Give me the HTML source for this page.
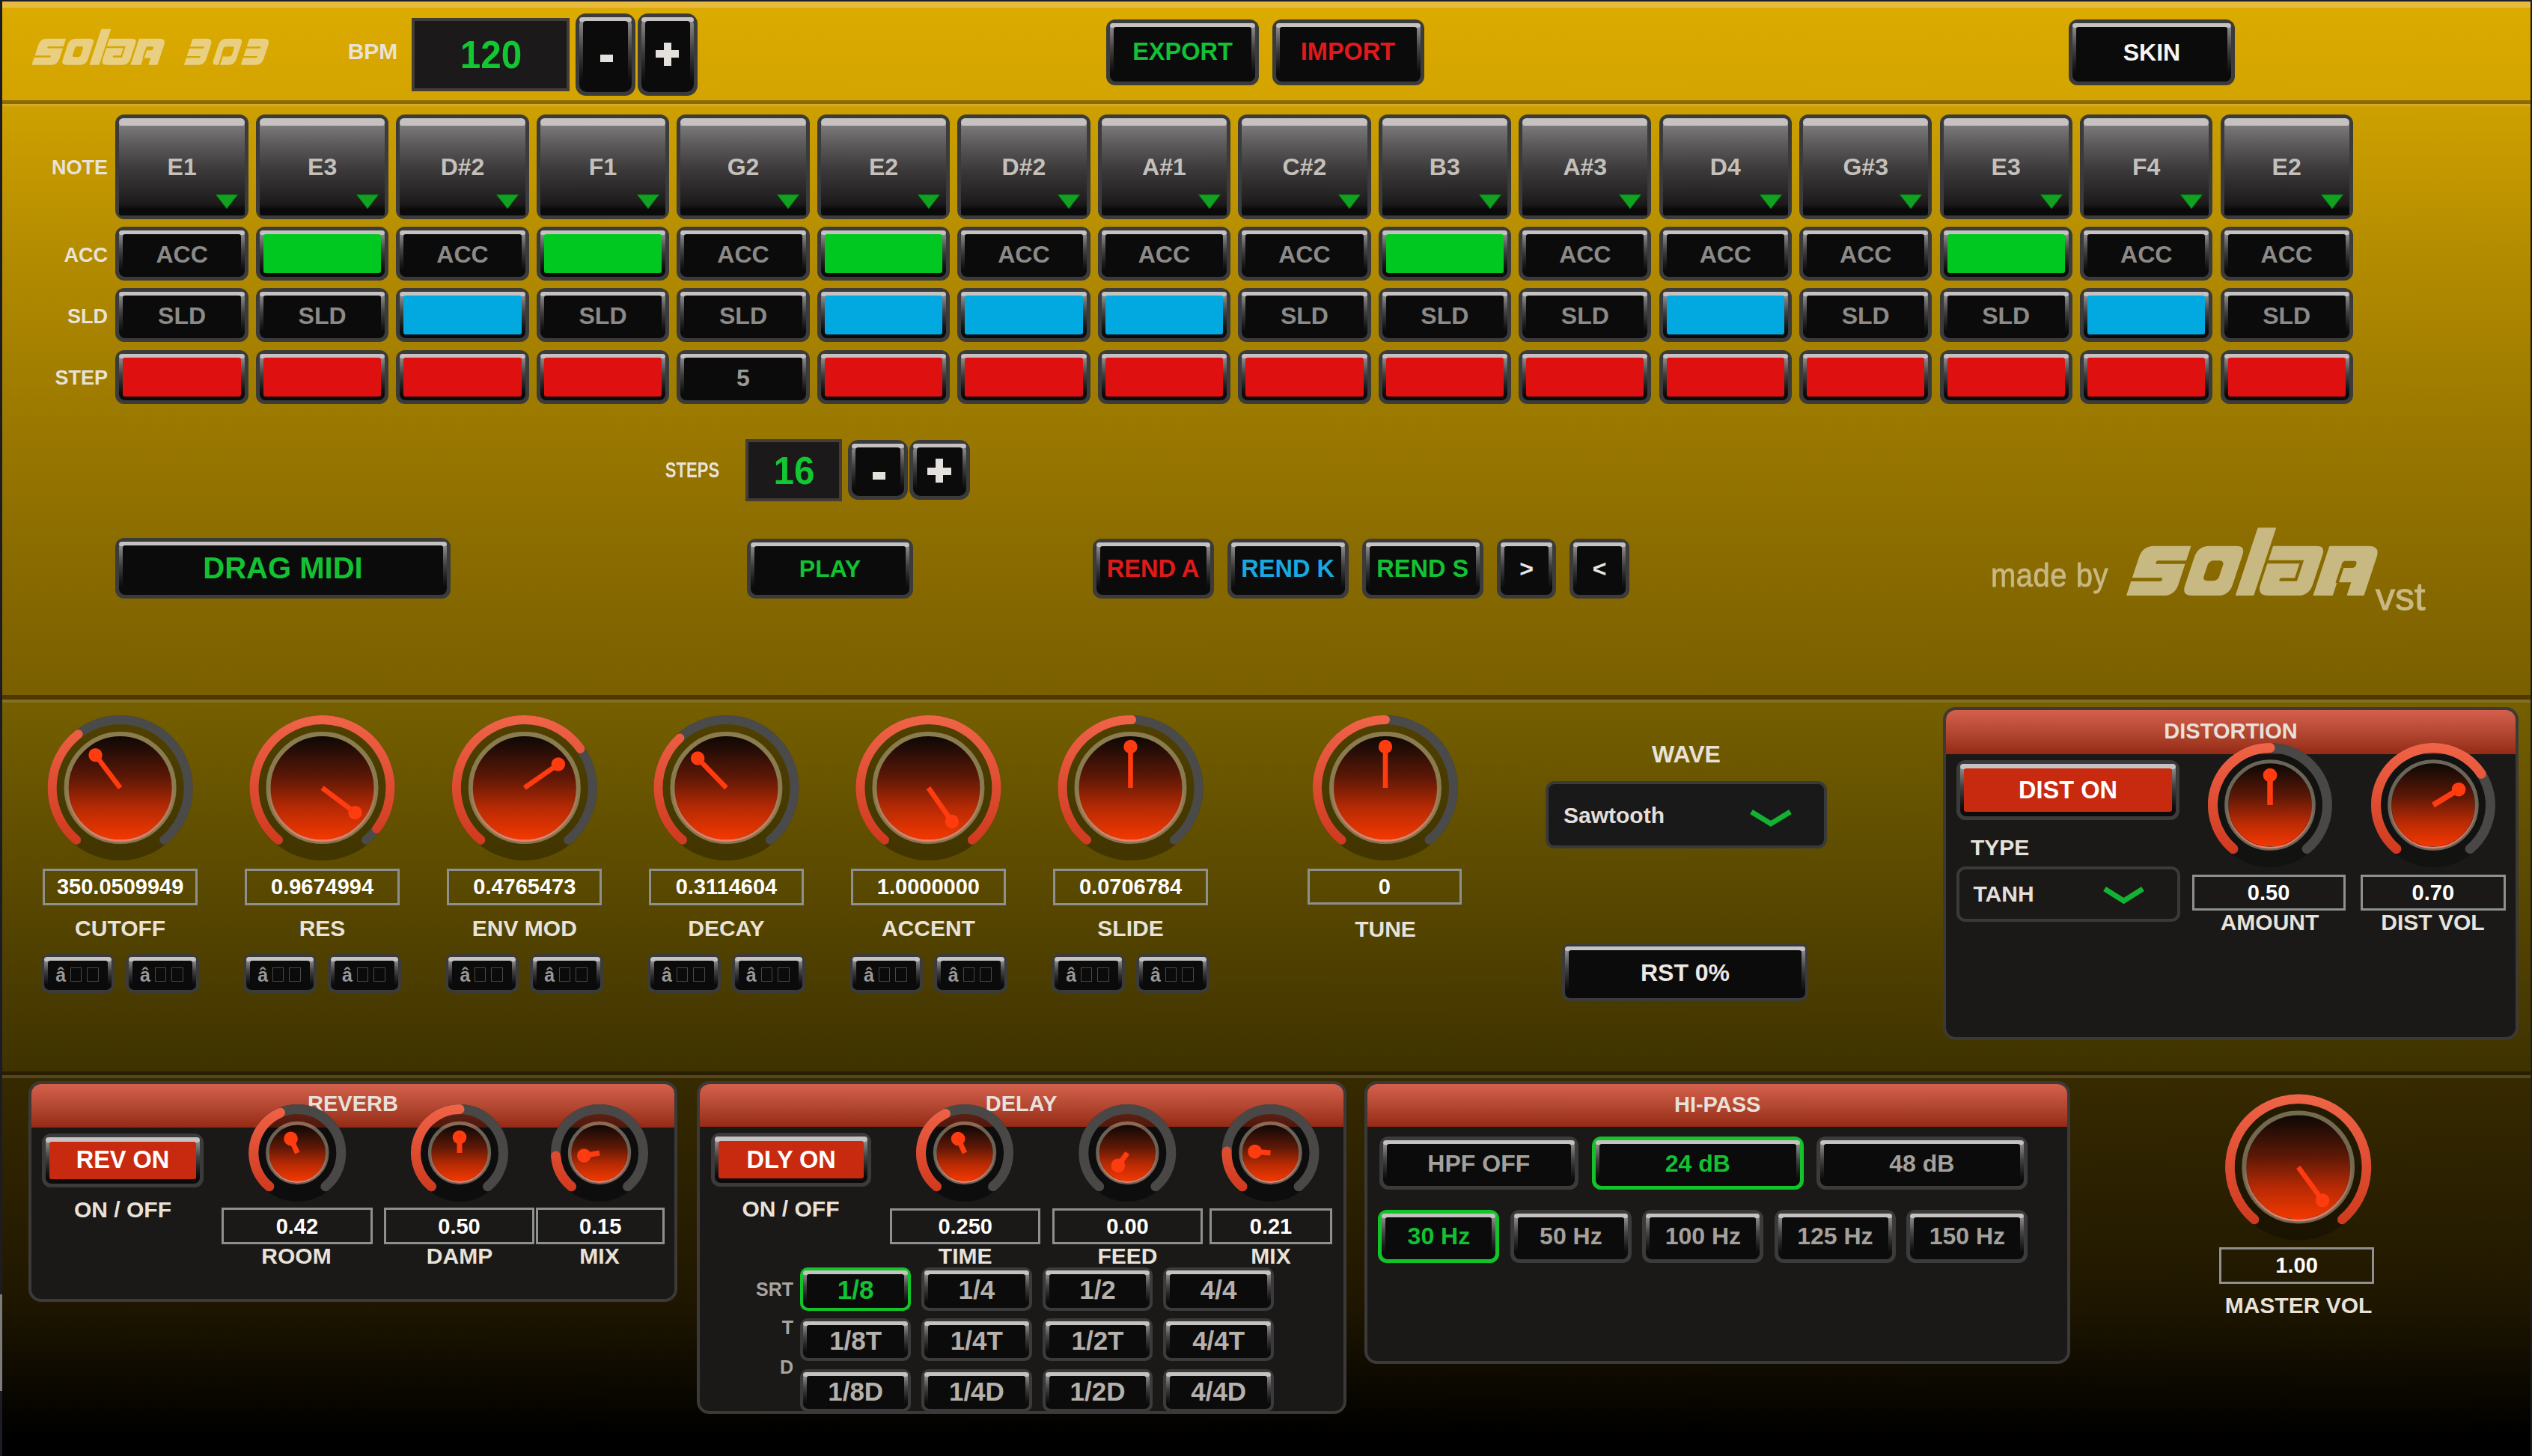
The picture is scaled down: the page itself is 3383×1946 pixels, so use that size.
<!DOCTYPE html><html><head><meta charset="utf-8"><style>
html,body{margin:0;padding:0;}
body{width:3383px;height:1946px;overflow:hidden;position:relative;background:#1c1d24;font-family:"Liberation Sans", sans-serif;}
.t{position:absolute;white-space:nowrap;}
.bb{position:absolute;box-sizing:border-box;}
.bv{position:absolute;}
.ab{position:absolute;box-sizing:border-box;}
svg{position:absolute;overflow:visible;}
</style></head><body>
<div class="ab" style="left:3px;top:2px;width:3378px;height:132px;background:linear-gradient(#e8ba3e 0,#e8ba3e 8px,#dcab00 9px,#d3a300 100%)"></div>
<div class="ab" style="left:3px;top:134px;width:3378px;height:5px;background:#8c6a00"></div>
<div class="ab" style="left:3px;top:141px;width:3378px;height:788px;background:linear-gradient(#cea000 0,#b48c00 25%,#9e7b00 50%,#8b6c00 75%,#7a5f00 100%)"></div>
<div class="ab" style="left:3px;top:139px;width:3378px;height:4px;background:linear-gradient(#d8ae32,#cfa200)"></div>
<div class="ab" style="left:3px;top:929px;width:3378px;height:6px;background:#4e3a00"></div>
<div class="ab" style="left:3px;top:935px;width:3378px;height:4px;background:#857022"></div>
<div class="ab" style="left:3px;top:939px;width:3378px;height:493px;background:linear-gradient(#755f00,#3e3200)"></div>
<div class="ab" style="left:3px;top:1432px;width:3378px;height:5px;background:#2a1e00"></div>
<div class="ab" style="left:3px;top:1437px;width:3378px;height:4px;background:#54491e"></div>
<div class="ab" style="left:3px;top:1441px;width:3378px;height:505px;background:linear-gradient(#372a00 0,#1e1600 60%,#000 95%)"></div>
<svg style="left:0;top:0" width="3383" height="1946"><defs><mask id="lgA" maskUnits="userSpaceOnUse" x="0" y="0" width="3383" height="1946"><g transform="translate(38.00,86.8) scale(1) skewX(-18.26)"><path d="M12.4,-35 H38.1 Q38.6,-35 38.6,-34.5 V-8 Q38.6,0 30.6,0 H4.9 Q4.4,0 4.4,-0.5 V-27 Q4.4,-35 12.4,-35 Z" fill="#fff"/><rect x="17.6" y="-24.7" width="30" height="2.4" rx="1.2" fill="#000"/><rect x="2" y="-12.6" width="24" height="2.5" rx="1.2" fill="#000"/><path d="M51.5,-35 H71.0 Q77.0,-35 77.0,-29 V-8 Q77.0,0 69.0,0 H50.5 Q43.5,0 43.5,-7 V-27 Q43.5,-35 51.5,-35 Z" fill="#fff"/><rect x="54.7" y="-24.7" width="10.9" height="14.2" rx="3" fill="#000"/><path d="M82.0,-48 H94.0 Q94.5,-48 94.5,-47.5 V-0.5 Q94.5,0 94.0,0 H82.0 Q81.5,0 81.5,-0.5 V-47.5 Q81.5,-48 82.0,-48 Z" fill="#fff"/><path d="M97.1,-35 H127.6 Q133.6,-35 133.6,-29 V-8 Q133.6,0 125.6,0 H104.6 Q96.6,0 96.6,-8 V-34.5 Q96.6,-35 97.1,-35 Z" fill="#fff"/><path d="M96.6,-23.8 H120.5 V-11.3 H110" fill="none" stroke="#000" stroke-width="2.3" stroke-linecap="round"/><path d="M136.9,-35 H164.4 Q172.4,-35 172.4,-27 V-0.5 Q172.4,0 171.9,0 H136.9 Q136.4,0 136.4,-0.5 V-34.5 Q136.4,-35 136.9,-35 Z" fill="#fff"/><rect x="149.3" y="-24.5" width="10.3" height="4.9" rx="2" fill="#000"/><rect x="149.3" y="-20" width="2.3" height="11" fill="#000"/><rect x="150.3" y="-9.4" width="9.9" height="10" fill="#000"/><path d="M208.8,-35 H226.9 Q234.9,-35 234.9,-27 V-8 Q234.9,0 226.9,0 H208.8 Q207.8,0 207.8,-1 V-34 Q207.8,-35 208.8,-35 Z" fill="#fff"/><rect x="199.8" y="-24.5" width="26.8" height="2.4" fill="#000"/><rect x="199.8" y="-11.8" width="26.1" height="2.2" fill="#000"/><path d="M284.7,-35 H303.6 Q311.6,-35 311.6,-27 V-8 Q311.6,0 303.6,0 H284.7 Q283.7,0 283.7,-1 V-34 Q283.7,-35 284.7,-35 Z" fill="#fff"/><rect x="275.7" y="-24.5" width="26.8" height="2.4" fill="#000"/><rect x="275.7" y="-11.8" width="26.1" height="2.2" fill="#000"/><path d="M253,-35 H269.2 Q275.2,-35 275.2,-29 V-8 Q275.2,0 267.2,0 H251 Q245,0 245,-6 V-27 Q245,-35 253,-35 Z" fill="#fff"/><rect x="253.2" y="-24.5" width="14.2" height="13.1" rx="3" fill="#000"/><rect x="253.6" y="-12" width="2.4" height="14" fill="#000"/></g></mask></defs><rect x="0" y="0" width="3383" height="1946" fill="#e8cf82" mask="url(#lgA)"/></svg>
<svg style="left:0;top:0" width="3383" height="1946"><defs><mask id="lgB" maskUnits="userSpaceOnUse" x="0" y="0" width="3383" height="1946"><g transform="translate(2832.68,796) scale(1.89) skewX(-18.26)"><path d="M12.4,-35 H38.1 Q38.6,-35 38.6,-34.5 V-8 Q38.6,0 30.6,0 H4.9 Q4.4,0 4.4,-0.5 V-27 Q4.4,-35 12.4,-35 Z" fill="#fff"/><rect x="17.6" y="-24.7" width="30" height="2.4" rx="1.2" fill="#000"/><rect x="2" y="-12.6" width="24" height="2.5" rx="1.2" fill="#000"/><path d="M51.5,-35 H71.0 Q77.0,-35 77.0,-29 V-8 Q77.0,0 69.0,0 H50.5 Q43.5,0 43.5,-7 V-27 Q43.5,-35 51.5,-35 Z" fill="#fff"/><rect x="54.7" y="-24.7" width="10.9" height="14.2" rx="3" fill="#000"/><path d="M82.0,-48 H94.0 Q94.5,-48 94.5,-47.5 V-0.5 Q94.5,0 94.0,0 H82.0 Q81.5,0 81.5,-0.5 V-47.5 Q81.5,-48 82.0,-48 Z" fill="#fff"/><path d="M97.1,-35 H127.6 Q133.6,-35 133.6,-29 V-8 Q133.6,0 125.6,0 H104.6 Q96.6,0 96.6,-8 V-34.5 Q96.6,-35 97.1,-35 Z" fill="#fff"/><path d="M96.6,-23.8 H120.5 V-11.3 H110" fill="none" stroke="#000" stroke-width="2.3" stroke-linecap="round"/><path d="M136.9,-35 H164.4 Q172.4,-35 172.4,-27 V-0.5 Q172.4,0 171.9,0 H136.9 Q136.4,0 136.4,-0.5 V-34.5 Q136.4,-35 136.9,-35 Z" fill="#fff"/><rect x="149.3" y="-24.5" width="10.3" height="4.9" rx="2" fill="#000"/><rect x="149.3" y="-20" width="2.3" height="11" fill="#000"/><rect x="150.3" y="-9.4" width="9.9" height="10" fill="#000"/></g></mask></defs><rect x="0" y="0" width="3383" height="1946" fill="#c8b882" mask="url(#lgB)"/></svg>
<div class="t" style="left:2660.0px;top:750.1px;font-size:40px;line-height:40px;color:#c8b882;font-weight:normal;transform:scaleY(1.1);transform-origin:0 80%;-webkit-text-stroke:0.7px #c8b882;letter-spacing:0.5px;">made by</div>
<div class="t" style="left:3174.0px;top:771.0px;font-size:52px;line-height:52px;color:#c8b882;font-weight:normal;-webkit-text-stroke:1px #c8b882;">vst</div>
<div class="t" style="left:-502.0px;width:2000px;text-align:center;top:54.1px;font-size:30px;line-height:30px;color:#e8e2d8;font-weight:bold;">BPM</div>
<div class="ab" style="left:550px;top:24px;width:211px;height:98px;background:#1b1919;border:4px solid #443c36"></div>
<div class="t" style="left:-344.0px;width:2000px;text-align:center;top:47.4px;font-size:52px;line-height:52px;color:#12c732;font-weight:bold;transform:scaleX(0.95);">120</div>
<div class="bb" style="left:769.0px;top:18.0px;width:80.0px;height:110.0px;border-radius:14px;background:#3b3b3b"><div class="bv" style="left:5px;right:5px;top:5px;bottom:5px;border-radius:10px;background:linear-gradient(#9a9898 0,#8a8888 6px,#454343 42%,#1a1a1a 72%,#0b0b0b 86%,#0b0b0b 100%)"></div><div class="bv" style="left:5px;right:5px;top:5px;height:6px;border-radius:10px 10px 5px 5px;background:#c6c2c2"></div><div class="bv" style="left:10px;right:10px;top:10px;bottom:10px;border-radius:4px;background:#0c0b0b"></div></div>
<div class="ab" style="left:802px;top:73px;width:17px;height:10px;background:#e4e0dc"></div>
<div class="bb" style="left:852.0px;top:18.0px;width:80.0px;height:110.0px;border-radius:14px;background:#3b3b3b"><div class="bv" style="left:5px;right:5px;top:5px;bottom:5px;border-radius:10px;background:linear-gradient(#9a9898 0,#8a8888 6px,#454343 42%,#1a1a1a 72%,#0b0b0b 86%,#0b0b0b 100%)"></div><div class="bv" style="left:5px;right:5px;top:5px;height:6px;border-radius:10px 10px 5px 5px;background:#c6c2c2"></div><div class="bv" style="left:10px;right:10px;top:10px;bottom:10px;border-radius:4px;background:#0c0b0b"></div></div>
<div class="ab" style="left:876px;top:67px;width:31px;height:10px;background:#e4e0dc"></div>
<div class="ab" style="left:886.5px;top:57px;width:10px;height:31px;background:#e4e0dc"></div>
<div class="bb" style="left:1478.0px;top:25.5px;width:204.0px;height:88.0px;border-radius:12px;background:#3b3b3b"><div class="bv" style="left:5px;right:5px;top:5px;bottom:5px;border-radius:8px;background:linear-gradient(#9a9898 0,#8a8888 6px,#454343 42%,#1a1a1a 72%,#0b0b0b 86%,#0b0b0b 100%)"></div><div class="bv" style="left:5px;right:5px;top:5px;height:6px;border-radius:8px 8px 5px 5px;background:#c6c2c2"></div><div class="bv" style="left:10px;right:10px;top:10px;bottom:10px;border-radius:3px;background:#0c0b0b"></div></div>
<div class="t" style="left:580.0px;width:2000px;text-align:center;top:53.3px;font-size:32.5px;line-height:32.5px;color:#12c232;font-weight:bold;">EXPORT</div>
<div class="bb" style="left:1699.5px;top:25.5px;width:203.0px;height:88.0px;border-radius:12px;background:#3b3b3b"><div class="bv" style="left:5px;right:5px;top:5px;bottom:5px;border-radius:8px;background:linear-gradient(#9a9898 0,#8a8888 6px,#454343 42%,#1a1a1a 72%,#0b0b0b 86%,#0b0b0b 100%)"></div><div class="bv" style="left:5px;right:5px;top:5px;height:6px;border-radius:8px 8px 5px 5px;background:#c6c2c2"></div><div class="bv" style="left:10px;right:10px;top:10px;bottom:10px;border-radius:3px;background:#0c0b0b"></div></div>
<div class="t" style="left:801.0px;width:2000px;text-align:center;top:53.3px;font-size:32.5px;line-height:32.5px;color:#e01a1a;font-weight:bold;">IMPORT</div>
<div class="bb" style="left:2764.0px;top:25.5px;width:222.0px;height:88.0px;border-radius:12px;background:#3b3b3b"><div class="bv" style="left:5px;right:5px;top:5px;bottom:5px;border-radius:8px;background:linear-gradient(#9a9898 0,#8a8888 6px,#454343 42%,#1a1a1a 72%,#0b0b0b 86%,#0b0b0b 100%)"></div><div class="bv" style="left:5px;right:5px;top:5px;height:6px;border-radius:8px 8px 5px 5px;background:#c6c2c2"></div><div class="bv" style="left:10px;right:10px;top:10px;bottom:10px;border-radius:3px;background:#0c0b0b"></div></div>
<div class="t" style="left:1875.0px;width:2000px;text-align:center;top:54.1px;font-size:32px;line-height:32px;color:#f8f6f4;font-weight:bold;">SKIN</div>
<div class="t" style="left:-1856.0px;width:2000px;text-align:right;top:210.9px;font-size:27px;line-height:27px;color:#e8e2d8;font-weight:bold;">NOTE</div>
<div class="t" style="left:-1856.0px;width:2000px;text-align:right;top:328.1px;font-size:27px;line-height:27px;color:#e8e2d8;font-weight:bold;">ACC</div>
<div class="t" style="left:-1856.0px;width:2000px;text-align:right;top:409.6px;font-size:27px;line-height:27px;color:#e8e2d8;font-weight:bold;">SLD</div>
<div class="t" style="left:-1856.0px;width:2000px;text-align:right;top:491.6px;font-size:27px;line-height:27px;color:#e8e2d8;font-weight:bold;">STEP</div>
<div class="bb" style="left:154.4px;top:153.0px;width:177.4px;height:140.0px;border-radius:12px;background:#3b3b3b"><div class="bv" style="left:5px;right:5px;top:5px;bottom:5px;border-radius:8px;background:linear-gradient(#9a9898 0,#8a8888 11px,#454343 42%,#1a1a1a 72%,#0b0b0b 86%,#0b0b0b 100%)"></div><div class="bv" style="left:5px;right:5px;top:5px;height:11px;border-radius:8px 8px 8px 8px;background:#c6c2c2"></div><div class="bv" style="left:5px;right:5px;top:15px;bottom:5px;border-radius:3px;background:linear-gradient(#7a7878 0,#5a5858 22%,#3a3838 50%,#222020 80%,#1a1818 88%,#0a0a0a 93%,#0a0a0a 100%)"></div></div>
<div class="t" style="left:-756.9px;width:2000px;text-align:center;top:206.7px;font-size:32px;line-height:32px;color:#c4c0bc;font-weight:bold;">E1</div>
<svg style="left:288.4px;top:260px" width="30" height="20"><polygon points="0,0 30,0 15,19" fill="#12a222" stroke="#0a5a10" stroke-width="1"/></svg>
<div class="bb" style="left:154.4px;top:303.0px;width:177.4px;height:72.0px;border-radius:12px;background:#3b3b3b"><div class="bv" style="left:5px;right:5px;top:5px;bottom:5px;border-radius:8px;background:linear-gradient(#9a9898 0,#8a8888 6px,#454343 42%,#1a1a1a 72%,#0b0b0b 86%,#0b0b0b 100%)"></div><div class="bv" style="left:5px;right:5px;top:5px;height:6px;border-radius:8px 8px 5px 5px;background:#c6c2c2"></div><div class="bv" style="left:10px;right:10px;top:10px;bottom:10px;border-radius:3px;background:#0c0b0b"></div></div>
<div class="t" style="left:-756.9px;width:2000px;text-align:center;top:324.4px;font-size:32px;line-height:32px;color:#8c8a88;font-weight:bold;">ACC</div>
<div class="bb" style="left:154.4px;top:385.0px;width:177.4px;height:72.0px;border-radius:12px;background:#3b3b3b"><div class="bv" style="left:5px;right:5px;top:5px;bottom:5px;border-radius:8px;background:linear-gradient(#9a9898 0,#8a8888 6px,#454343 42%,#1a1a1a 72%,#0b0b0b 86%,#0b0b0b 100%)"></div><div class="bv" style="left:5px;right:5px;top:5px;height:6px;border-radius:8px 8px 5px 5px;background:#c6c2c2"></div><div class="bv" style="left:10px;right:10px;top:10px;bottom:10px;border-radius:3px;background:#0c0b0b"></div></div>
<div class="t" style="left:-756.9px;width:2000px;text-align:center;top:405.9px;font-size:32px;line-height:32px;color:#8c8a88;font-weight:bold;">SLD</div>
<div class="bb" style="left:154.4px;top:468.0px;width:177.4px;height:72.0px;border-radius:12px;background:#3b3b3b"><div class="bv" style="left:5px;right:5px;top:5px;bottom:5px;border-radius:8px;background:linear-gradient(#9a9898 0,#8a8888 6px,#454343 42%,#1a1a1a 72%,#0b0b0b 86%,#0b0b0b 100%)"></div><div class="bv" style="left:5px;right:5px;top:5px;height:6px;border-radius:8px 8px 5px 5px;background:#c6c2c2"></div><div class="bv" style="left:10px;right:10px;top:10px;bottom:10px;border-radius:3px;background:#de1010"></div></div>
<div class="bb" style="left:341.9px;top:153.0px;width:177.4px;height:140.0px;border-radius:12px;background:#3b3b3b"><div class="bv" style="left:5px;right:5px;top:5px;bottom:5px;border-radius:8px;background:linear-gradient(#9a9898 0,#8a8888 11px,#454343 42%,#1a1a1a 72%,#0b0b0b 86%,#0b0b0b 100%)"></div><div class="bv" style="left:5px;right:5px;top:5px;height:11px;border-radius:8px 8px 8px 8px;background:#c6c2c2"></div><div class="bv" style="left:5px;right:5px;top:15px;bottom:5px;border-radius:3px;background:linear-gradient(#7a7878 0,#5a5858 22%,#3a3838 50%,#222020 80%,#1a1818 88%,#0a0a0a 93%,#0a0a0a 100%)"></div></div>
<div class="t" style="left:-569.4px;width:2000px;text-align:center;top:206.7px;font-size:32px;line-height:32px;color:#c4c0bc;font-weight:bold;">E3</div>
<svg style="left:475.9px;top:260px" width="30" height="20"><polygon points="0,0 30,0 15,19" fill="#12a222" stroke="#0a5a10" stroke-width="1"/></svg>
<div class="bb" style="left:341.9px;top:303.0px;width:177.4px;height:72.0px;border-radius:12px;background:#3b3b3b"><div class="bv" style="left:5px;right:5px;top:5px;bottom:5px;border-radius:8px;background:linear-gradient(#9a9898 0,#8a8888 6px,#454343 42%,#1a1a1a 72%,#0b0b0b 86%,#0b0b0b 100%)"></div><div class="bv" style="left:5px;right:5px;top:5px;height:6px;border-radius:8px 8px 5px 5px;background:#c6c2c2"></div><div class="bv" style="left:10px;right:10px;top:10px;bottom:10px;border-radius:3px;background:#00c820"></div></div>
<div class="bb" style="left:341.9px;top:385.0px;width:177.4px;height:72.0px;border-radius:12px;background:#3b3b3b"><div class="bv" style="left:5px;right:5px;top:5px;bottom:5px;border-radius:8px;background:linear-gradient(#9a9898 0,#8a8888 6px,#454343 42%,#1a1a1a 72%,#0b0b0b 86%,#0b0b0b 100%)"></div><div class="bv" style="left:5px;right:5px;top:5px;height:6px;border-radius:8px 8px 5px 5px;background:#c6c2c2"></div><div class="bv" style="left:10px;right:10px;top:10px;bottom:10px;border-radius:3px;background:#0c0b0b"></div></div>
<div class="t" style="left:-569.4px;width:2000px;text-align:center;top:405.9px;font-size:32px;line-height:32px;color:#8c8a88;font-weight:bold;">SLD</div>
<div class="bb" style="left:341.9px;top:468.0px;width:177.4px;height:72.0px;border-radius:12px;background:#3b3b3b"><div class="bv" style="left:5px;right:5px;top:5px;bottom:5px;border-radius:8px;background:linear-gradient(#9a9898 0,#8a8888 6px,#454343 42%,#1a1a1a 72%,#0b0b0b 86%,#0b0b0b 100%)"></div><div class="bv" style="left:5px;right:5px;top:5px;height:6px;border-radius:8px 8px 5px 5px;background:#c6c2c2"></div><div class="bv" style="left:10px;right:10px;top:10px;bottom:10px;border-radius:3px;background:#de1010"></div></div>
<div class="bb" style="left:529.3px;top:153.0px;width:177.4px;height:140.0px;border-radius:12px;background:#3b3b3b"><div class="bv" style="left:5px;right:5px;top:5px;bottom:5px;border-radius:8px;background:linear-gradient(#9a9898 0,#8a8888 11px,#454343 42%,#1a1a1a 72%,#0b0b0b 86%,#0b0b0b 100%)"></div><div class="bv" style="left:5px;right:5px;top:5px;height:11px;border-radius:8px 8px 8px 8px;background:#c6c2c2"></div><div class="bv" style="left:5px;right:5px;top:15px;bottom:5px;border-radius:3px;background:linear-gradient(#7a7878 0,#5a5858 22%,#3a3838 50%,#222020 80%,#1a1818 88%,#0a0a0a 93%,#0a0a0a 100%)"></div></div>
<div class="t" style="left:-382.0px;width:2000px;text-align:center;top:206.7px;font-size:32px;line-height:32px;color:#c4c0bc;font-weight:bold;">D#2</div>
<svg style="left:663.3px;top:260px" width="30" height="20"><polygon points="0,0 30,0 15,19" fill="#12a222" stroke="#0a5a10" stroke-width="1"/></svg>
<div class="bb" style="left:529.3px;top:303.0px;width:177.4px;height:72.0px;border-radius:12px;background:#3b3b3b"><div class="bv" style="left:5px;right:5px;top:5px;bottom:5px;border-radius:8px;background:linear-gradient(#9a9898 0,#8a8888 6px,#454343 42%,#1a1a1a 72%,#0b0b0b 86%,#0b0b0b 100%)"></div><div class="bv" style="left:5px;right:5px;top:5px;height:6px;border-radius:8px 8px 5px 5px;background:#c6c2c2"></div><div class="bv" style="left:10px;right:10px;top:10px;bottom:10px;border-radius:3px;background:#0c0b0b"></div></div>
<div class="t" style="left:-382.0px;width:2000px;text-align:center;top:324.4px;font-size:32px;line-height:32px;color:#8c8a88;font-weight:bold;">ACC</div>
<div class="bb" style="left:529.3px;top:385.0px;width:177.4px;height:72.0px;border-radius:12px;background:#3b3b3b"><div class="bv" style="left:5px;right:5px;top:5px;bottom:5px;border-radius:8px;background:linear-gradient(#9a9898 0,#8a8888 6px,#454343 42%,#1a1a1a 72%,#0b0b0b 86%,#0b0b0b 100%)"></div><div class="bv" style="left:5px;right:5px;top:5px;height:6px;border-radius:8px 8px 5px 5px;background:#c6c2c2"></div><div class="bv" style="left:10px;right:10px;top:10px;bottom:10px;border-radius:3px;background:#02a8e0"></div></div>
<div class="bb" style="left:529.3px;top:468.0px;width:177.4px;height:72.0px;border-radius:12px;background:#3b3b3b"><div class="bv" style="left:5px;right:5px;top:5px;bottom:5px;border-radius:8px;background:linear-gradient(#9a9898 0,#8a8888 6px,#454343 42%,#1a1a1a 72%,#0b0b0b 86%,#0b0b0b 100%)"></div><div class="bv" style="left:5px;right:5px;top:5px;height:6px;border-radius:8px 8px 5px 5px;background:#c6c2c2"></div><div class="bv" style="left:10px;right:10px;top:10px;bottom:10px;border-radius:3px;background:#de1010"></div></div>
<div class="bb" style="left:716.8px;top:153.0px;width:177.4px;height:140.0px;border-radius:12px;background:#3b3b3b"><div class="bv" style="left:5px;right:5px;top:5px;bottom:5px;border-radius:8px;background:linear-gradient(#9a9898 0,#8a8888 11px,#454343 42%,#1a1a1a 72%,#0b0b0b 86%,#0b0b0b 100%)"></div><div class="bv" style="left:5px;right:5px;top:5px;height:11px;border-radius:8px 8px 8px 8px;background:#c6c2c2"></div><div class="bv" style="left:5px;right:5px;top:15px;bottom:5px;border-radius:3px;background:linear-gradient(#7a7878 0,#5a5858 22%,#3a3838 50%,#222020 80%,#1a1818 88%,#0a0a0a 93%,#0a0a0a 100%)"></div></div>
<div class="t" style="left:-194.5px;width:2000px;text-align:center;top:206.7px;font-size:32px;line-height:32px;color:#c4c0bc;font-weight:bold;">F1</div>
<svg style="left:850.8px;top:260px" width="30" height="20"><polygon points="0,0 30,0 15,19" fill="#12a222" stroke="#0a5a10" stroke-width="1"/></svg>
<div class="bb" style="left:716.8px;top:303.0px;width:177.4px;height:72.0px;border-radius:12px;background:#3b3b3b"><div class="bv" style="left:5px;right:5px;top:5px;bottom:5px;border-radius:8px;background:linear-gradient(#9a9898 0,#8a8888 6px,#454343 42%,#1a1a1a 72%,#0b0b0b 86%,#0b0b0b 100%)"></div><div class="bv" style="left:5px;right:5px;top:5px;height:6px;border-radius:8px 8px 5px 5px;background:#c6c2c2"></div><div class="bv" style="left:10px;right:10px;top:10px;bottom:10px;border-radius:3px;background:#00c820"></div></div>
<div class="bb" style="left:716.8px;top:385.0px;width:177.4px;height:72.0px;border-radius:12px;background:#3b3b3b"><div class="bv" style="left:5px;right:5px;top:5px;bottom:5px;border-radius:8px;background:linear-gradient(#9a9898 0,#8a8888 6px,#454343 42%,#1a1a1a 72%,#0b0b0b 86%,#0b0b0b 100%)"></div><div class="bv" style="left:5px;right:5px;top:5px;height:6px;border-radius:8px 8px 5px 5px;background:#c6c2c2"></div><div class="bv" style="left:10px;right:10px;top:10px;bottom:10px;border-radius:3px;background:#0c0b0b"></div></div>
<div class="t" style="left:-194.5px;width:2000px;text-align:center;top:405.9px;font-size:32px;line-height:32px;color:#8c8a88;font-weight:bold;">SLD</div>
<div class="bb" style="left:716.8px;top:468.0px;width:177.4px;height:72.0px;border-radius:12px;background:#3b3b3b"><div class="bv" style="left:5px;right:5px;top:5px;bottom:5px;border-radius:8px;background:linear-gradient(#9a9898 0,#8a8888 6px,#454343 42%,#1a1a1a 72%,#0b0b0b 86%,#0b0b0b 100%)"></div><div class="bv" style="left:5px;right:5px;top:5px;height:6px;border-radius:8px 8px 5px 5px;background:#c6c2c2"></div><div class="bv" style="left:10px;right:10px;top:10px;bottom:10px;border-radius:3px;background:#de1010"></div></div>
<div class="bb" style="left:904.3px;top:153.0px;width:177.4px;height:140.0px;border-radius:12px;background:#3b3b3b"><div class="bv" style="left:5px;right:5px;top:5px;bottom:5px;border-radius:8px;background:linear-gradient(#9a9898 0,#8a8888 11px,#454343 42%,#1a1a1a 72%,#0b0b0b 86%,#0b0b0b 100%)"></div><div class="bv" style="left:5px;right:5px;top:5px;height:11px;border-radius:8px 8px 8px 8px;background:#c6c2c2"></div><div class="bv" style="left:5px;right:5px;top:15px;bottom:5px;border-radius:3px;background:linear-gradient(#7a7878 0,#5a5858 22%,#3a3838 50%,#222020 80%,#1a1818 88%,#0a0a0a 93%,#0a0a0a 100%)"></div></div>
<div class="t" style="left:-7.0px;width:2000px;text-align:center;top:206.7px;font-size:32px;line-height:32px;color:#c4c0bc;font-weight:bold;">G2</div>
<svg style="left:1038.3px;top:260px" width="30" height="20"><polygon points="0,0 30,0 15,19" fill="#12a222" stroke="#0a5a10" stroke-width="1"/></svg>
<div class="bb" style="left:904.3px;top:303.0px;width:177.4px;height:72.0px;border-radius:12px;background:#3b3b3b"><div class="bv" style="left:5px;right:5px;top:5px;bottom:5px;border-radius:8px;background:linear-gradient(#9a9898 0,#8a8888 6px,#454343 42%,#1a1a1a 72%,#0b0b0b 86%,#0b0b0b 100%)"></div><div class="bv" style="left:5px;right:5px;top:5px;height:6px;border-radius:8px 8px 5px 5px;background:#c6c2c2"></div><div class="bv" style="left:10px;right:10px;top:10px;bottom:10px;border-radius:3px;background:#0c0b0b"></div></div>
<div class="t" style="left:-7.0px;width:2000px;text-align:center;top:324.4px;font-size:32px;line-height:32px;color:#8c8a88;font-weight:bold;">ACC</div>
<div class="bb" style="left:904.3px;top:385.0px;width:177.4px;height:72.0px;border-radius:12px;background:#3b3b3b"><div class="bv" style="left:5px;right:5px;top:5px;bottom:5px;border-radius:8px;background:linear-gradient(#9a9898 0,#8a8888 6px,#454343 42%,#1a1a1a 72%,#0b0b0b 86%,#0b0b0b 100%)"></div><div class="bv" style="left:5px;right:5px;top:5px;height:6px;border-radius:8px 8px 5px 5px;background:#c6c2c2"></div><div class="bv" style="left:10px;right:10px;top:10px;bottom:10px;border-radius:3px;background:#0c0b0b"></div></div>
<div class="t" style="left:-7.0px;width:2000px;text-align:center;top:405.9px;font-size:32px;line-height:32px;color:#8c8a88;font-weight:bold;">SLD</div>
<div class="bb" style="left:904.3px;top:468.0px;width:177.4px;height:72.0px;border-radius:12px;background:#3b3b3b"><div class="bv" style="left:5px;right:5px;top:5px;bottom:5px;border-radius:8px;background:linear-gradient(#9a9898 0,#8a8888 6px,#454343 42%,#1a1a1a 72%,#0b0b0b 86%,#0b0b0b 100%)"></div><div class="bv" style="left:5px;right:5px;top:5px;height:6px;border-radius:8px 8px 5px 5px;background:#c6c2c2"></div><div class="bv" style="left:10px;right:10px;top:10px;bottom:10px;border-radius:3px;background:#0c0b0b"></div></div>
<div class="t" style="left:-7.0px;width:2000px;text-align:center;top:488.9px;font-size:32px;line-height:32px;color:#9a9896;font-weight:bold;">5</div>
<div class="bb" style="left:1091.8px;top:153.0px;width:177.4px;height:140.0px;border-radius:12px;background:#3b3b3b"><div class="bv" style="left:5px;right:5px;top:5px;bottom:5px;border-radius:8px;background:linear-gradient(#9a9898 0,#8a8888 11px,#454343 42%,#1a1a1a 72%,#0b0b0b 86%,#0b0b0b 100%)"></div><div class="bv" style="left:5px;right:5px;top:5px;height:11px;border-radius:8px 8px 8px 8px;background:#c6c2c2"></div><div class="bv" style="left:5px;right:5px;top:15px;bottom:5px;border-radius:3px;background:linear-gradient(#7a7878 0,#5a5858 22%,#3a3838 50%,#222020 80%,#1a1818 88%,#0a0a0a 93%,#0a0a0a 100%)"></div></div>
<div class="t" style="left:180.5px;width:2000px;text-align:center;top:206.7px;font-size:32px;line-height:32px;color:#c4c0bc;font-weight:bold;">E2</div>
<svg style="left:1225.8px;top:260px" width="30" height="20"><polygon points="0,0 30,0 15,19" fill="#12a222" stroke="#0a5a10" stroke-width="1"/></svg>
<div class="bb" style="left:1091.8px;top:303.0px;width:177.4px;height:72.0px;border-radius:12px;background:#3b3b3b"><div class="bv" style="left:5px;right:5px;top:5px;bottom:5px;border-radius:8px;background:linear-gradient(#9a9898 0,#8a8888 6px,#454343 42%,#1a1a1a 72%,#0b0b0b 86%,#0b0b0b 100%)"></div><div class="bv" style="left:5px;right:5px;top:5px;height:6px;border-radius:8px 8px 5px 5px;background:#c6c2c2"></div><div class="bv" style="left:10px;right:10px;top:10px;bottom:10px;border-radius:3px;background:#00c820"></div></div>
<div class="bb" style="left:1091.8px;top:385.0px;width:177.4px;height:72.0px;border-radius:12px;background:#3b3b3b"><div class="bv" style="left:5px;right:5px;top:5px;bottom:5px;border-radius:8px;background:linear-gradient(#9a9898 0,#8a8888 6px,#454343 42%,#1a1a1a 72%,#0b0b0b 86%,#0b0b0b 100%)"></div><div class="bv" style="left:5px;right:5px;top:5px;height:6px;border-radius:8px 8px 5px 5px;background:#c6c2c2"></div><div class="bv" style="left:10px;right:10px;top:10px;bottom:10px;border-radius:3px;background:#02a8e0"></div></div>
<div class="bb" style="left:1091.8px;top:468.0px;width:177.4px;height:72.0px;border-radius:12px;background:#3b3b3b"><div class="bv" style="left:5px;right:5px;top:5px;bottom:5px;border-radius:8px;background:linear-gradient(#9a9898 0,#8a8888 6px,#454343 42%,#1a1a1a 72%,#0b0b0b 86%,#0b0b0b 100%)"></div><div class="bv" style="left:5px;right:5px;top:5px;height:6px;border-radius:8px 8px 5px 5px;background:#c6c2c2"></div><div class="bv" style="left:10px;right:10px;top:10px;bottom:10px;border-radius:3px;background:#de1010"></div></div>
<div class="bb" style="left:1279.2px;top:153.0px;width:177.4px;height:140.0px;border-radius:12px;background:#3b3b3b"><div class="bv" style="left:5px;right:5px;top:5px;bottom:5px;border-radius:8px;background:linear-gradient(#9a9898 0,#8a8888 11px,#454343 42%,#1a1a1a 72%,#0b0b0b 86%,#0b0b0b 100%)"></div><div class="bv" style="left:5px;right:5px;top:5px;height:11px;border-radius:8px 8px 8px 8px;background:#c6c2c2"></div><div class="bv" style="left:5px;right:5px;top:15px;bottom:5px;border-radius:3px;background:linear-gradient(#7a7878 0,#5a5858 22%,#3a3838 50%,#222020 80%,#1a1818 88%,#0a0a0a 93%,#0a0a0a 100%)"></div></div>
<div class="t" style="left:367.9px;width:2000px;text-align:center;top:206.7px;font-size:32px;line-height:32px;color:#c4c0bc;font-weight:bold;">D#2</div>
<svg style="left:1413.2px;top:260px" width="30" height="20"><polygon points="0,0 30,0 15,19" fill="#12a222" stroke="#0a5a10" stroke-width="1"/></svg>
<div class="bb" style="left:1279.2px;top:303.0px;width:177.4px;height:72.0px;border-radius:12px;background:#3b3b3b"><div class="bv" style="left:5px;right:5px;top:5px;bottom:5px;border-radius:8px;background:linear-gradient(#9a9898 0,#8a8888 6px,#454343 42%,#1a1a1a 72%,#0b0b0b 86%,#0b0b0b 100%)"></div><div class="bv" style="left:5px;right:5px;top:5px;height:6px;border-radius:8px 8px 5px 5px;background:#c6c2c2"></div><div class="bv" style="left:10px;right:10px;top:10px;bottom:10px;border-radius:3px;background:#0c0b0b"></div></div>
<div class="t" style="left:367.9px;width:2000px;text-align:center;top:324.4px;font-size:32px;line-height:32px;color:#8c8a88;font-weight:bold;">ACC</div>
<div class="bb" style="left:1279.2px;top:385.0px;width:177.4px;height:72.0px;border-radius:12px;background:#3b3b3b"><div class="bv" style="left:5px;right:5px;top:5px;bottom:5px;border-radius:8px;background:linear-gradient(#9a9898 0,#8a8888 6px,#454343 42%,#1a1a1a 72%,#0b0b0b 86%,#0b0b0b 100%)"></div><div class="bv" style="left:5px;right:5px;top:5px;height:6px;border-radius:8px 8px 5px 5px;background:#c6c2c2"></div><div class="bv" style="left:10px;right:10px;top:10px;bottom:10px;border-radius:3px;background:#02a8e0"></div></div>
<div class="bb" style="left:1279.2px;top:468.0px;width:177.4px;height:72.0px;border-radius:12px;background:#3b3b3b"><div class="bv" style="left:5px;right:5px;top:5px;bottom:5px;border-radius:8px;background:linear-gradient(#9a9898 0,#8a8888 6px,#454343 42%,#1a1a1a 72%,#0b0b0b 86%,#0b0b0b 100%)"></div><div class="bv" style="left:5px;right:5px;top:5px;height:6px;border-radius:8px 8px 5px 5px;background:#c6c2c2"></div><div class="bv" style="left:10px;right:10px;top:10px;bottom:10px;border-radius:3px;background:#de1010"></div></div>
<div class="bb" style="left:1466.7px;top:153.0px;width:177.4px;height:140.0px;border-radius:12px;background:#3b3b3b"><div class="bv" style="left:5px;right:5px;top:5px;bottom:5px;border-radius:8px;background:linear-gradient(#9a9898 0,#8a8888 11px,#454343 42%,#1a1a1a 72%,#0b0b0b 86%,#0b0b0b 100%)"></div><div class="bv" style="left:5px;right:5px;top:5px;height:11px;border-radius:8px 8px 8px 8px;background:#c6c2c2"></div><div class="bv" style="left:5px;right:5px;top:15px;bottom:5px;border-radius:3px;background:linear-gradient(#7a7878 0,#5a5858 22%,#3a3838 50%,#222020 80%,#1a1818 88%,#0a0a0a 93%,#0a0a0a 100%)"></div></div>
<div class="t" style="left:555.4px;width:2000px;text-align:center;top:206.7px;font-size:32px;line-height:32px;color:#c4c0bc;font-weight:bold;">A#1</div>
<svg style="left:1600.7px;top:260px" width="30" height="20"><polygon points="0,0 30,0 15,19" fill="#12a222" stroke="#0a5a10" stroke-width="1"/></svg>
<div class="bb" style="left:1466.7px;top:303.0px;width:177.4px;height:72.0px;border-radius:12px;background:#3b3b3b"><div class="bv" style="left:5px;right:5px;top:5px;bottom:5px;border-radius:8px;background:linear-gradient(#9a9898 0,#8a8888 6px,#454343 42%,#1a1a1a 72%,#0b0b0b 86%,#0b0b0b 100%)"></div><div class="bv" style="left:5px;right:5px;top:5px;height:6px;border-radius:8px 8px 5px 5px;background:#c6c2c2"></div><div class="bv" style="left:10px;right:10px;top:10px;bottom:10px;border-radius:3px;background:#0c0b0b"></div></div>
<div class="t" style="left:555.4px;width:2000px;text-align:center;top:324.4px;font-size:32px;line-height:32px;color:#8c8a88;font-weight:bold;">ACC</div>
<div class="bb" style="left:1466.7px;top:385.0px;width:177.4px;height:72.0px;border-radius:12px;background:#3b3b3b"><div class="bv" style="left:5px;right:5px;top:5px;bottom:5px;border-radius:8px;background:linear-gradient(#9a9898 0,#8a8888 6px,#454343 42%,#1a1a1a 72%,#0b0b0b 86%,#0b0b0b 100%)"></div><div class="bv" style="left:5px;right:5px;top:5px;height:6px;border-radius:8px 8px 5px 5px;background:#c6c2c2"></div><div class="bv" style="left:10px;right:10px;top:10px;bottom:10px;border-radius:3px;background:#02a8e0"></div></div>
<div class="bb" style="left:1466.7px;top:468.0px;width:177.4px;height:72.0px;border-radius:12px;background:#3b3b3b"><div class="bv" style="left:5px;right:5px;top:5px;bottom:5px;border-radius:8px;background:linear-gradient(#9a9898 0,#8a8888 6px,#454343 42%,#1a1a1a 72%,#0b0b0b 86%,#0b0b0b 100%)"></div><div class="bv" style="left:5px;right:5px;top:5px;height:6px;border-radius:8px 8px 5px 5px;background:#c6c2c2"></div><div class="bv" style="left:10px;right:10px;top:10px;bottom:10px;border-radius:3px;background:#de1010"></div></div>
<div class="bb" style="left:1654.2px;top:153.0px;width:177.4px;height:140.0px;border-radius:12px;background:#3b3b3b"><div class="bv" style="left:5px;right:5px;top:5px;bottom:5px;border-radius:8px;background:linear-gradient(#9a9898 0,#8a8888 11px,#454343 42%,#1a1a1a 72%,#0b0b0b 86%,#0b0b0b 100%)"></div><div class="bv" style="left:5px;right:5px;top:5px;height:11px;border-radius:8px 8px 8px 8px;background:#c6c2c2"></div><div class="bv" style="left:5px;right:5px;top:15px;bottom:5px;border-radius:3px;background:linear-gradient(#7a7878 0,#5a5858 22%,#3a3838 50%,#222020 80%,#1a1818 88%,#0a0a0a 93%,#0a0a0a 100%)"></div></div>
<div class="t" style="left:742.9px;width:2000px;text-align:center;top:206.7px;font-size:32px;line-height:32px;color:#c4c0bc;font-weight:bold;">C#2</div>
<svg style="left:1788.2px;top:260px" width="30" height="20"><polygon points="0,0 30,0 15,19" fill="#12a222" stroke="#0a5a10" stroke-width="1"/></svg>
<div class="bb" style="left:1654.2px;top:303.0px;width:177.4px;height:72.0px;border-radius:12px;background:#3b3b3b"><div class="bv" style="left:5px;right:5px;top:5px;bottom:5px;border-radius:8px;background:linear-gradient(#9a9898 0,#8a8888 6px,#454343 42%,#1a1a1a 72%,#0b0b0b 86%,#0b0b0b 100%)"></div><div class="bv" style="left:5px;right:5px;top:5px;height:6px;border-radius:8px 8px 5px 5px;background:#c6c2c2"></div><div class="bv" style="left:10px;right:10px;top:10px;bottom:10px;border-radius:3px;background:#0c0b0b"></div></div>
<div class="t" style="left:742.9px;width:2000px;text-align:center;top:324.4px;font-size:32px;line-height:32px;color:#8c8a88;font-weight:bold;">ACC</div>
<div class="bb" style="left:1654.2px;top:385.0px;width:177.4px;height:72.0px;border-radius:12px;background:#3b3b3b"><div class="bv" style="left:5px;right:5px;top:5px;bottom:5px;border-radius:8px;background:linear-gradient(#9a9898 0,#8a8888 6px,#454343 42%,#1a1a1a 72%,#0b0b0b 86%,#0b0b0b 100%)"></div><div class="bv" style="left:5px;right:5px;top:5px;height:6px;border-radius:8px 8px 5px 5px;background:#c6c2c2"></div><div class="bv" style="left:10px;right:10px;top:10px;bottom:10px;border-radius:3px;background:#0c0b0b"></div></div>
<div class="t" style="left:742.9px;width:2000px;text-align:center;top:405.9px;font-size:32px;line-height:32px;color:#8c8a88;font-weight:bold;">SLD</div>
<div class="bb" style="left:1654.2px;top:468.0px;width:177.4px;height:72.0px;border-radius:12px;background:#3b3b3b"><div class="bv" style="left:5px;right:5px;top:5px;bottom:5px;border-radius:8px;background:linear-gradient(#9a9898 0,#8a8888 6px,#454343 42%,#1a1a1a 72%,#0b0b0b 86%,#0b0b0b 100%)"></div><div class="bv" style="left:5px;right:5px;top:5px;height:6px;border-radius:8px 8px 5px 5px;background:#c6c2c2"></div><div class="bv" style="left:10px;right:10px;top:10px;bottom:10px;border-radius:3px;background:#de1010"></div></div>
<div class="bb" style="left:1841.6px;top:153.0px;width:177.4px;height:140.0px;border-radius:12px;background:#3b3b3b"><div class="bv" style="left:5px;right:5px;top:5px;bottom:5px;border-radius:8px;background:linear-gradient(#9a9898 0,#8a8888 11px,#454343 42%,#1a1a1a 72%,#0b0b0b 86%,#0b0b0b 100%)"></div><div class="bv" style="left:5px;right:5px;top:5px;height:11px;border-radius:8px 8px 8px 8px;background:#c6c2c2"></div><div class="bv" style="left:5px;right:5px;top:15px;bottom:5px;border-radius:3px;background:linear-gradient(#7a7878 0,#5a5858 22%,#3a3838 50%,#222020 80%,#1a1818 88%,#0a0a0a 93%,#0a0a0a 100%)"></div></div>
<div class="t" style="left:930.3px;width:2000px;text-align:center;top:206.7px;font-size:32px;line-height:32px;color:#c4c0bc;font-weight:bold;">B3</div>
<svg style="left:1975.6px;top:260px" width="30" height="20"><polygon points="0,0 30,0 15,19" fill="#12a222" stroke="#0a5a10" stroke-width="1"/></svg>
<div class="bb" style="left:1841.6px;top:303.0px;width:177.4px;height:72.0px;border-radius:12px;background:#3b3b3b"><div class="bv" style="left:5px;right:5px;top:5px;bottom:5px;border-radius:8px;background:linear-gradient(#9a9898 0,#8a8888 6px,#454343 42%,#1a1a1a 72%,#0b0b0b 86%,#0b0b0b 100%)"></div><div class="bv" style="left:5px;right:5px;top:5px;height:6px;border-radius:8px 8px 5px 5px;background:#c6c2c2"></div><div class="bv" style="left:10px;right:10px;top:10px;bottom:10px;border-radius:3px;background:#00c820"></div></div>
<div class="bb" style="left:1841.6px;top:385.0px;width:177.4px;height:72.0px;border-radius:12px;background:#3b3b3b"><div class="bv" style="left:5px;right:5px;top:5px;bottom:5px;border-radius:8px;background:linear-gradient(#9a9898 0,#8a8888 6px,#454343 42%,#1a1a1a 72%,#0b0b0b 86%,#0b0b0b 100%)"></div><div class="bv" style="left:5px;right:5px;top:5px;height:6px;border-radius:8px 8px 5px 5px;background:#c6c2c2"></div><div class="bv" style="left:10px;right:10px;top:10px;bottom:10px;border-radius:3px;background:#0c0b0b"></div></div>
<div class="t" style="left:930.3px;width:2000px;text-align:center;top:405.9px;font-size:32px;line-height:32px;color:#8c8a88;font-weight:bold;">SLD</div>
<div class="bb" style="left:1841.6px;top:468.0px;width:177.4px;height:72.0px;border-radius:12px;background:#3b3b3b"><div class="bv" style="left:5px;right:5px;top:5px;bottom:5px;border-radius:8px;background:linear-gradient(#9a9898 0,#8a8888 6px,#454343 42%,#1a1a1a 72%,#0b0b0b 86%,#0b0b0b 100%)"></div><div class="bv" style="left:5px;right:5px;top:5px;height:6px;border-radius:8px 8px 5px 5px;background:#c6c2c2"></div><div class="bv" style="left:10px;right:10px;top:10px;bottom:10px;border-radius:3px;background:#de1010"></div></div>
<div class="bb" style="left:2029.1px;top:153.0px;width:177.4px;height:140.0px;border-radius:12px;background:#3b3b3b"><div class="bv" style="left:5px;right:5px;top:5px;bottom:5px;border-radius:8px;background:linear-gradient(#9a9898 0,#8a8888 11px,#454343 42%,#1a1a1a 72%,#0b0b0b 86%,#0b0b0b 100%)"></div><div class="bv" style="left:5px;right:5px;top:5px;height:11px;border-radius:8px 8px 8px 8px;background:#c6c2c2"></div><div class="bv" style="left:5px;right:5px;top:15px;bottom:5px;border-radius:3px;background:linear-gradient(#7a7878 0,#5a5858 22%,#3a3838 50%,#222020 80%,#1a1818 88%,#0a0a0a 93%,#0a0a0a 100%)"></div></div>
<div class="t" style="left:1117.8px;width:2000px;text-align:center;top:206.7px;font-size:32px;line-height:32px;color:#c4c0bc;font-weight:bold;">A#3</div>
<svg style="left:2163.1px;top:260px" width="30" height="20"><polygon points="0,0 30,0 15,19" fill="#12a222" stroke="#0a5a10" stroke-width="1"/></svg>
<div class="bb" style="left:2029.1px;top:303.0px;width:177.4px;height:72.0px;border-radius:12px;background:#3b3b3b"><div class="bv" style="left:5px;right:5px;top:5px;bottom:5px;border-radius:8px;background:linear-gradient(#9a9898 0,#8a8888 6px,#454343 42%,#1a1a1a 72%,#0b0b0b 86%,#0b0b0b 100%)"></div><div class="bv" style="left:5px;right:5px;top:5px;height:6px;border-radius:8px 8px 5px 5px;background:#c6c2c2"></div><div class="bv" style="left:10px;right:10px;top:10px;bottom:10px;border-radius:3px;background:#0c0b0b"></div></div>
<div class="t" style="left:1117.8px;width:2000px;text-align:center;top:324.4px;font-size:32px;line-height:32px;color:#8c8a88;font-weight:bold;">ACC</div>
<div class="bb" style="left:2029.1px;top:385.0px;width:177.4px;height:72.0px;border-radius:12px;background:#3b3b3b"><div class="bv" style="left:5px;right:5px;top:5px;bottom:5px;border-radius:8px;background:linear-gradient(#9a9898 0,#8a8888 6px,#454343 42%,#1a1a1a 72%,#0b0b0b 86%,#0b0b0b 100%)"></div><div class="bv" style="left:5px;right:5px;top:5px;height:6px;border-radius:8px 8px 5px 5px;background:#c6c2c2"></div><div class="bv" style="left:10px;right:10px;top:10px;bottom:10px;border-radius:3px;background:#0c0b0b"></div></div>
<div class="t" style="left:1117.8px;width:2000px;text-align:center;top:405.9px;font-size:32px;line-height:32px;color:#8c8a88;font-weight:bold;">SLD</div>
<div class="bb" style="left:2029.1px;top:468.0px;width:177.4px;height:72.0px;border-radius:12px;background:#3b3b3b"><div class="bv" style="left:5px;right:5px;top:5px;bottom:5px;border-radius:8px;background:linear-gradient(#9a9898 0,#8a8888 6px,#454343 42%,#1a1a1a 72%,#0b0b0b 86%,#0b0b0b 100%)"></div><div class="bv" style="left:5px;right:5px;top:5px;height:6px;border-radius:8px 8px 5px 5px;background:#c6c2c2"></div><div class="bv" style="left:10px;right:10px;top:10px;bottom:10px;border-radius:3px;background:#de1010"></div></div>
<div class="bb" style="left:2216.6px;top:153.0px;width:177.4px;height:140.0px;border-radius:12px;background:#3b3b3b"><div class="bv" style="left:5px;right:5px;top:5px;bottom:5px;border-radius:8px;background:linear-gradient(#9a9898 0,#8a8888 11px,#454343 42%,#1a1a1a 72%,#0b0b0b 86%,#0b0b0b 100%)"></div><div class="bv" style="left:5px;right:5px;top:5px;height:11px;border-radius:8px 8px 8px 8px;background:#c6c2c2"></div><div class="bv" style="left:5px;right:5px;top:15px;bottom:5px;border-radius:3px;background:linear-gradient(#7a7878 0,#5a5858 22%,#3a3838 50%,#222020 80%,#1a1818 88%,#0a0a0a 93%,#0a0a0a 100%)"></div></div>
<div class="t" style="left:1305.3px;width:2000px;text-align:center;top:206.7px;font-size:32px;line-height:32px;color:#c4c0bc;font-weight:bold;">D4</div>
<svg style="left:2350.6px;top:260px" width="30" height="20"><polygon points="0,0 30,0 15,19" fill="#12a222" stroke="#0a5a10" stroke-width="1"/></svg>
<div class="bb" style="left:2216.6px;top:303.0px;width:177.4px;height:72.0px;border-radius:12px;background:#3b3b3b"><div class="bv" style="left:5px;right:5px;top:5px;bottom:5px;border-radius:8px;background:linear-gradient(#9a9898 0,#8a8888 6px,#454343 42%,#1a1a1a 72%,#0b0b0b 86%,#0b0b0b 100%)"></div><div class="bv" style="left:5px;right:5px;top:5px;height:6px;border-radius:8px 8px 5px 5px;background:#c6c2c2"></div><div class="bv" style="left:10px;right:10px;top:10px;bottom:10px;border-radius:3px;background:#0c0b0b"></div></div>
<div class="t" style="left:1305.3px;width:2000px;text-align:center;top:324.4px;font-size:32px;line-height:32px;color:#8c8a88;font-weight:bold;">ACC</div>
<div class="bb" style="left:2216.6px;top:385.0px;width:177.4px;height:72.0px;border-radius:12px;background:#3b3b3b"><div class="bv" style="left:5px;right:5px;top:5px;bottom:5px;border-radius:8px;background:linear-gradient(#9a9898 0,#8a8888 6px,#454343 42%,#1a1a1a 72%,#0b0b0b 86%,#0b0b0b 100%)"></div><div class="bv" style="left:5px;right:5px;top:5px;height:6px;border-radius:8px 8px 5px 5px;background:#c6c2c2"></div><div class="bv" style="left:10px;right:10px;top:10px;bottom:10px;border-radius:3px;background:#02a8e0"></div></div>
<div class="bb" style="left:2216.6px;top:468.0px;width:177.4px;height:72.0px;border-radius:12px;background:#3b3b3b"><div class="bv" style="left:5px;right:5px;top:5px;bottom:5px;border-radius:8px;background:linear-gradient(#9a9898 0,#8a8888 6px,#454343 42%,#1a1a1a 72%,#0b0b0b 86%,#0b0b0b 100%)"></div><div class="bv" style="left:5px;right:5px;top:5px;height:6px;border-radius:8px 8px 5px 5px;background:#c6c2c2"></div><div class="bv" style="left:10px;right:10px;top:10px;bottom:10px;border-radius:3px;background:#de1010"></div></div>
<div class="bb" style="left:2404.0px;top:153.0px;width:177.4px;height:140.0px;border-radius:12px;background:#3b3b3b"><div class="bv" style="left:5px;right:5px;top:5px;bottom:5px;border-radius:8px;background:linear-gradient(#9a9898 0,#8a8888 11px,#454343 42%,#1a1a1a 72%,#0b0b0b 86%,#0b0b0b 100%)"></div><div class="bv" style="left:5px;right:5px;top:5px;height:11px;border-radius:8px 8px 8px 8px;background:#c6c2c2"></div><div class="bv" style="left:5px;right:5px;top:15px;bottom:5px;border-radius:3px;background:linear-gradient(#7a7878 0,#5a5858 22%,#3a3838 50%,#222020 80%,#1a1818 88%,#0a0a0a 93%,#0a0a0a 100%)"></div></div>
<div class="t" style="left:1492.7px;width:2000px;text-align:center;top:206.7px;font-size:32px;line-height:32px;color:#c4c0bc;font-weight:bold;">G#3</div>
<svg style="left:2538.0px;top:260px" width="30" height="20"><polygon points="0,0 30,0 15,19" fill="#12a222" stroke="#0a5a10" stroke-width="1"/></svg>
<div class="bb" style="left:2404.0px;top:303.0px;width:177.4px;height:72.0px;border-radius:12px;background:#3b3b3b"><div class="bv" style="left:5px;right:5px;top:5px;bottom:5px;border-radius:8px;background:linear-gradient(#9a9898 0,#8a8888 6px,#454343 42%,#1a1a1a 72%,#0b0b0b 86%,#0b0b0b 100%)"></div><div class="bv" style="left:5px;right:5px;top:5px;height:6px;border-radius:8px 8px 5px 5px;background:#c6c2c2"></div><div class="bv" style="left:10px;right:10px;top:10px;bottom:10px;border-radius:3px;background:#0c0b0b"></div></div>
<div class="t" style="left:1492.7px;width:2000px;text-align:center;top:324.4px;font-size:32px;line-height:32px;color:#8c8a88;font-weight:bold;">ACC</div>
<div class="bb" style="left:2404.0px;top:385.0px;width:177.4px;height:72.0px;border-radius:12px;background:#3b3b3b"><div class="bv" style="left:5px;right:5px;top:5px;bottom:5px;border-radius:8px;background:linear-gradient(#9a9898 0,#8a8888 6px,#454343 42%,#1a1a1a 72%,#0b0b0b 86%,#0b0b0b 100%)"></div><div class="bv" style="left:5px;right:5px;top:5px;height:6px;border-radius:8px 8px 5px 5px;background:#c6c2c2"></div><div class="bv" style="left:10px;right:10px;top:10px;bottom:10px;border-radius:3px;background:#0c0b0b"></div></div>
<div class="t" style="left:1492.7px;width:2000px;text-align:center;top:405.9px;font-size:32px;line-height:32px;color:#8c8a88;font-weight:bold;">SLD</div>
<div class="bb" style="left:2404.0px;top:468.0px;width:177.4px;height:72.0px;border-radius:12px;background:#3b3b3b"><div class="bv" style="left:5px;right:5px;top:5px;bottom:5px;border-radius:8px;background:linear-gradient(#9a9898 0,#8a8888 6px,#454343 42%,#1a1a1a 72%,#0b0b0b 86%,#0b0b0b 100%)"></div><div class="bv" style="left:5px;right:5px;top:5px;height:6px;border-radius:8px 8px 5px 5px;background:#c6c2c2"></div><div class="bv" style="left:10px;right:10px;top:10px;bottom:10px;border-radius:3px;background:#de1010"></div></div>
<div class="bb" style="left:2591.5px;top:153.0px;width:177.4px;height:140.0px;border-radius:12px;background:#3b3b3b"><div class="bv" style="left:5px;right:5px;top:5px;bottom:5px;border-radius:8px;background:linear-gradient(#9a9898 0,#8a8888 11px,#454343 42%,#1a1a1a 72%,#0b0b0b 86%,#0b0b0b 100%)"></div><div class="bv" style="left:5px;right:5px;top:5px;height:11px;border-radius:8px 8px 8px 8px;background:#c6c2c2"></div><div class="bv" style="left:5px;right:5px;top:15px;bottom:5px;border-radius:3px;background:linear-gradient(#7a7878 0,#5a5858 22%,#3a3838 50%,#222020 80%,#1a1818 88%,#0a0a0a 93%,#0a0a0a 100%)"></div></div>
<div class="t" style="left:1680.2px;width:2000px;text-align:center;top:206.7px;font-size:32px;line-height:32px;color:#c4c0bc;font-weight:bold;">E3</div>
<svg style="left:2725.5px;top:260px" width="30" height="20"><polygon points="0,0 30,0 15,19" fill="#12a222" stroke="#0a5a10" stroke-width="1"/></svg>
<div class="bb" style="left:2591.5px;top:303.0px;width:177.4px;height:72.0px;border-radius:12px;background:#3b3b3b"><div class="bv" style="left:5px;right:5px;top:5px;bottom:5px;border-radius:8px;background:linear-gradient(#9a9898 0,#8a8888 6px,#454343 42%,#1a1a1a 72%,#0b0b0b 86%,#0b0b0b 100%)"></div><div class="bv" style="left:5px;right:5px;top:5px;height:6px;border-radius:8px 8px 5px 5px;background:#c6c2c2"></div><div class="bv" style="left:10px;right:10px;top:10px;bottom:10px;border-radius:3px;background:#00c820"></div></div>
<div class="bb" style="left:2591.5px;top:385.0px;width:177.4px;height:72.0px;border-radius:12px;background:#3b3b3b"><div class="bv" style="left:5px;right:5px;top:5px;bottom:5px;border-radius:8px;background:linear-gradient(#9a9898 0,#8a8888 6px,#454343 42%,#1a1a1a 72%,#0b0b0b 86%,#0b0b0b 100%)"></div><div class="bv" style="left:5px;right:5px;top:5px;height:6px;border-radius:8px 8px 5px 5px;background:#c6c2c2"></div><div class="bv" style="left:10px;right:10px;top:10px;bottom:10px;border-radius:3px;background:#0c0b0b"></div></div>
<div class="t" style="left:1680.2px;width:2000px;text-align:center;top:405.9px;font-size:32px;line-height:32px;color:#8c8a88;font-weight:bold;">SLD</div>
<div class="bb" style="left:2591.5px;top:468.0px;width:177.4px;height:72.0px;border-radius:12px;background:#3b3b3b"><div class="bv" style="left:5px;right:5px;top:5px;bottom:5px;border-radius:8px;background:linear-gradient(#9a9898 0,#8a8888 6px,#454343 42%,#1a1a1a 72%,#0b0b0b 86%,#0b0b0b 100%)"></div><div class="bv" style="left:5px;right:5px;top:5px;height:6px;border-radius:8px 8px 5px 5px;background:#c6c2c2"></div><div class="bv" style="left:10px;right:10px;top:10px;bottom:10px;border-radius:3px;background:#de1010"></div></div>
<div class="bb" style="left:2779.0px;top:153.0px;width:177.4px;height:140.0px;border-radius:12px;background:#3b3b3b"><div class="bv" style="left:5px;right:5px;top:5px;bottom:5px;border-radius:8px;background:linear-gradient(#9a9898 0,#8a8888 11px,#454343 42%,#1a1a1a 72%,#0b0b0b 86%,#0b0b0b 100%)"></div><div class="bv" style="left:5px;right:5px;top:5px;height:11px;border-radius:8px 8px 8px 8px;background:#c6c2c2"></div><div class="bv" style="left:5px;right:5px;top:15px;bottom:5px;border-radius:3px;background:linear-gradient(#7a7878 0,#5a5858 22%,#3a3838 50%,#222020 80%,#1a1818 88%,#0a0a0a 93%,#0a0a0a 100%)"></div></div>
<div class="t" style="left:1867.7px;width:2000px;text-align:center;top:206.7px;font-size:32px;line-height:32px;color:#c4c0bc;font-weight:bold;">F4</div>
<svg style="left:2913.0px;top:260px" width="30" height="20"><polygon points="0,0 30,0 15,19" fill="#12a222" stroke="#0a5a10" stroke-width="1"/></svg>
<div class="bb" style="left:2779.0px;top:303.0px;width:177.4px;height:72.0px;border-radius:12px;background:#3b3b3b"><div class="bv" style="left:5px;right:5px;top:5px;bottom:5px;border-radius:8px;background:linear-gradient(#9a9898 0,#8a8888 6px,#454343 42%,#1a1a1a 72%,#0b0b0b 86%,#0b0b0b 100%)"></div><div class="bv" style="left:5px;right:5px;top:5px;height:6px;border-radius:8px 8px 5px 5px;background:#c6c2c2"></div><div class="bv" style="left:10px;right:10px;top:10px;bottom:10px;border-radius:3px;background:#0c0b0b"></div></div>
<div class="t" style="left:1867.7px;width:2000px;text-align:center;top:324.4px;font-size:32px;line-height:32px;color:#8c8a88;font-weight:bold;">ACC</div>
<div class="bb" style="left:2779.0px;top:385.0px;width:177.4px;height:72.0px;border-radius:12px;background:#3b3b3b"><div class="bv" style="left:5px;right:5px;top:5px;bottom:5px;border-radius:8px;background:linear-gradient(#9a9898 0,#8a8888 6px,#454343 42%,#1a1a1a 72%,#0b0b0b 86%,#0b0b0b 100%)"></div><div class="bv" style="left:5px;right:5px;top:5px;height:6px;border-radius:8px 8px 5px 5px;background:#c6c2c2"></div><div class="bv" style="left:10px;right:10px;top:10px;bottom:10px;border-radius:3px;background:#02a8e0"></div></div>
<div class="bb" style="left:2779.0px;top:468.0px;width:177.4px;height:72.0px;border-radius:12px;background:#3b3b3b"><div class="bv" style="left:5px;right:5px;top:5px;bottom:5px;border-radius:8px;background:linear-gradient(#9a9898 0,#8a8888 6px,#454343 42%,#1a1a1a 72%,#0b0b0b 86%,#0b0b0b 100%)"></div><div class="bv" style="left:5px;right:5px;top:5px;height:6px;border-radius:8px 8px 5px 5px;background:#c6c2c2"></div><div class="bv" style="left:10px;right:10px;top:10px;bottom:10px;border-radius:3px;background:#de1010"></div></div>
<div class="bb" style="left:2966.5px;top:153.0px;width:177.4px;height:140.0px;border-radius:12px;background:#3b3b3b"><div class="bv" style="left:5px;right:5px;top:5px;bottom:5px;border-radius:8px;background:linear-gradient(#9a9898 0,#8a8888 11px,#454343 42%,#1a1a1a 72%,#0b0b0b 86%,#0b0b0b 100%)"></div><div class="bv" style="left:5px;right:5px;top:5px;height:11px;border-radius:8px 8px 8px 8px;background:#c6c2c2"></div><div class="bv" style="left:5px;right:5px;top:15px;bottom:5px;border-radius:3px;background:linear-gradient(#7a7878 0,#5a5858 22%,#3a3838 50%,#222020 80%,#1a1818 88%,#0a0a0a 93%,#0a0a0a 100%)"></div></div>
<div class="t" style="left:2055.2px;width:2000px;text-align:center;top:206.7px;font-size:32px;line-height:32px;color:#c4c0bc;font-weight:bold;">E2</div>
<svg style="left:3100.5px;top:260px" width="30" height="20"><polygon points="0,0 30,0 15,19" fill="#12a222" stroke="#0a5a10" stroke-width="1"/></svg>
<div class="bb" style="left:2966.5px;top:303.0px;width:177.4px;height:72.0px;border-radius:12px;background:#3b3b3b"><div class="bv" style="left:5px;right:5px;top:5px;bottom:5px;border-radius:8px;background:linear-gradient(#9a9898 0,#8a8888 6px,#454343 42%,#1a1a1a 72%,#0b0b0b 86%,#0b0b0b 100%)"></div><div class="bv" style="left:5px;right:5px;top:5px;height:6px;border-radius:8px 8px 5px 5px;background:#c6c2c2"></div><div class="bv" style="left:10px;right:10px;top:10px;bottom:10px;border-radius:3px;background:#0c0b0b"></div></div>
<div class="t" style="left:2055.2px;width:2000px;text-align:center;top:324.4px;font-size:32px;line-height:32px;color:#8c8a88;font-weight:bold;">ACC</div>
<div class="bb" style="left:2966.5px;top:385.0px;width:177.4px;height:72.0px;border-radius:12px;background:#3b3b3b"><div class="bv" style="left:5px;right:5px;top:5px;bottom:5px;border-radius:8px;background:linear-gradient(#9a9898 0,#8a8888 6px,#454343 42%,#1a1a1a 72%,#0b0b0b 86%,#0b0b0b 100%)"></div><div class="bv" style="left:5px;right:5px;top:5px;height:6px;border-radius:8px 8px 5px 5px;background:#c6c2c2"></div><div class="bv" style="left:10px;right:10px;top:10px;bottom:10px;border-radius:3px;background:#0c0b0b"></div></div>
<div class="t" style="left:2055.2px;width:2000px;text-align:center;top:405.9px;font-size:32px;line-height:32px;color:#8c8a88;font-weight:bold;">SLD</div>
<div class="bb" style="left:2966.5px;top:468.0px;width:177.4px;height:72.0px;border-radius:12px;background:#3b3b3b"><div class="bv" style="left:5px;right:5px;top:5px;bottom:5px;border-radius:8px;background:linear-gradient(#9a9898 0,#8a8888 6px,#454343 42%,#1a1a1a 72%,#0b0b0b 86%,#0b0b0b 100%)"></div><div class="bv" style="left:5px;right:5px;top:5px;height:6px;border-radius:8px 8px 5px 5px;background:#c6c2c2"></div><div class="bv" style="left:10px;right:10px;top:10px;bottom:10px;border-radius:3px;background:#de1010"></div></div>
<div class="t" style="left:-75.0px;width:2000px;text-align:center;top:614.2px;font-size:29px;line-height:29px;color:#e8e2d8;font-weight:bold;transform:scaleX(0.76);">STEPS</div>
<div class="ab" style="left:996px;top:587px;width:129px;height:83px;background:#1b1919;border:4px solid #443c36"></div>
<div class="t" style="left:60.5px;width:2000px;text-align:center;top:602.7px;font-size:52px;line-height:52px;color:#12c732;font-weight:bold;transform:scaleX(0.95);">16</div>
<div class="bb" style="left:1132.5px;top:588.0px;width:80.0px;height:80.0px;border-radius:14px;background:#3b3b3b"><div class="bv" style="left:5px;right:5px;top:5px;bottom:5px;border-radius:10px;background:linear-gradient(#9a9898 0,#8a8888 6px,#454343 42%,#1a1a1a 72%,#0b0b0b 86%,#0b0b0b 100%)"></div><div class="bv" style="left:5px;right:5px;top:5px;height:6px;border-radius:10px 10px 5px 5px;background:#c6c2c2"></div><div class="bv" style="left:10px;right:10px;top:10px;bottom:10px;border-radius:4px;background:#0c0b0b"></div></div>
<div class="ab" style="left:1166px;top:631px;width:17px;height:10px;background:#e4e0dc"></div>
<div class="bb" style="left:1215.0px;top:588.0px;width:81.0px;height:80.0px;border-radius:14px;background:#3b3b3b"><div class="bv" style="left:5px;right:5px;top:5px;bottom:5px;border-radius:10px;background:linear-gradient(#9a9898 0,#8a8888 6px,#454343 42%,#1a1a1a 72%,#0b0b0b 86%,#0b0b0b 100%)"></div><div class="bv" style="left:5px;right:5px;top:5px;height:6px;border-radius:10px 10px 5px 5px;background:#c6c2c2"></div><div class="bv" style="left:10px;right:10px;top:10px;bottom:10px;border-radius:4px;background:#0c0b0b"></div></div>
<div class="ab" style="left:1239px;top:625px;width:32px;height:10px;background:#e4e0dc"></div>
<div class="ab" style="left:1250px;top:613px;width:10px;height:32px;background:#e4e0dc"></div>
<div class="bb" style="left:154.2px;top:719.0px;width:447.5px;height:80.5px;border-radius:12px;background:#3b3b3b"><div class="bv" style="left:5px;right:5px;top:5px;bottom:5px;border-radius:8px;background:linear-gradient(#9a9898 0,#8a8888 6px,#454343 42%,#1a1a1a 72%,#0b0b0b 86%,#0b0b0b 100%)"></div><div class="bv" style="left:5px;right:5px;top:5px;height:6px;border-radius:8px 8px 5px 5px;background:#c6c2c2"></div><div class="bv" style="left:10px;right:10px;top:10px;bottom:10px;border-radius:3px;background:#0c0b0b"></div></div>
<div class="t" style="left:-622.0px;width:2000px;text-align:center;top:739.1px;font-size:40px;line-height:40px;color:#12c232;font-weight:bold;">DRAG MIDI</div>
<div class="bb" style="left:998.0px;top:719.5px;width:222.0px;height:80.0px;border-radius:12px;background:#3b3b3b"><div class="bv" style="left:5px;right:5px;top:5px;bottom:5px;border-radius:8px;background:linear-gradient(#9a9898 0,#8a8888 6px,#454343 42%,#1a1a1a 72%,#0b0b0b 86%,#0b0b0b 100%)"></div><div class="bv" style="left:5px;right:5px;top:5px;height:6px;border-radius:8px 8px 5px 5px;background:#c6c2c2"></div><div class="bv" style="left:10px;right:10px;top:10px;bottom:10px;border-radius:3px;background:#0c0b0b"></div></div>
<div class="t" style="left:109.0px;width:2000px;text-align:center;top:743.8px;font-size:32px;line-height:32px;color:#12c232;font-weight:bold;">PLAY</div>
<div class="bb" style="left:1459.5px;top:719.5px;width:162.0px;height:80.0px;border-radius:12px;background:#3b3b3b"><div class="bv" style="left:5px;right:5px;top:5px;bottom:5px;border-radius:8px;background:linear-gradient(#9a9898 0,#8a8888 6px,#454343 42%,#1a1a1a 72%,#0b0b0b 86%,#0b0b0b 100%)"></div><div class="bv" style="left:5px;right:5px;top:5px;height:6px;border-radius:8px 8px 5px 5px;background:#c6c2c2"></div><div class="bv" style="left:10px;right:10px;top:10px;bottom:10px;border-radius:3px;background:#0c0b0b"></div></div>
<div class="t" style="left:540.5px;width:2000px;text-align:center;top:743.5px;font-size:32.5px;line-height:32.5px;color:#e01a1a;font-weight:bold;">REND A</div>
<div class="bb" style="left:1639.6px;top:719.5px;width:162.0px;height:80.0px;border-radius:12px;background:#3b3b3b"><div class="bv" style="left:5px;right:5px;top:5px;bottom:5px;border-radius:8px;background:linear-gradient(#9a9898 0,#8a8888 6px,#454343 42%,#1a1a1a 72%,#0b0b0b 86%,#0b0b0b 100%)"></div><div class="bv" style="left:5px;right:5px;top:5px;height:6px;border-radius:8px 8px 5px 5px;background:#c6c2c2"></div><div class="bv" style="left:10px;right:10px;top:10px;bottom:10px;border-radius:3px;background:#0c0b0b"></div></div>
<div class="t" style="left:720.6px;width:2000px;text-align:center;top:743.5px;font-size:32.5px;line-height:32.5px;color:#18a8e0;font-weight:bold;">REND K</div>
<div class="bb" style="left:1819.7px;top:719.5px;width:162.0px;height:80.0px;border-radius:12px;background:#3b3b3b"><div class="bv" style="left:5px;right:5px;top:5px;bottom:5px;border-radius:8px;background:linear-gradient(#9a9898 0,#8a8888 6px,#454343 42%,#1a1a1a 72%,#0b0b0b 86%,#0b0b0b 100%)"></div><div class="bv" style="left:5px;right:5px;top:5px;height:6px;border-radius:8px 8px 5px 5px;background:#c6c2c2"></div><div class="bv" style="left:10px;right:10px;top:10px;bottom:10px;border-radius:3px;background:#0c0b0b"></div></div>
<div class="t" style="left:900.7px;width:2000px;text-align:center;top:743.5px;font-size:32.5px;line-height:32.5px;color:#12c232;font-weight:bold;">REND S</div>
<div class="bb" style="left:2000.0px;top:719.5px;width:79.0px;height:80.0px;border-radius:12px;background:#3b3b3b"><div class="bv" style="left:5px;right:5px;top:5px;bottom:5px;border-radius:8px;background:linear-gradient(#9a9898 0,#8a8888 6px,#454343 42%,#1a1a1a 72%,#0b0b0b 86%,#0b0b0b 100%)"></div><div class="bv" style="left:5px;right:5px;top:5px;height:6px;border-radius:8px 8px 5px 5px;background:#c6c2c2"></div><div class="bv" style="left:10px;right:10px;top:10px;bottom:10px;border-radius:3px;background:#0c0b0b"></div></div>
<div class="t" style="left:1039.5px;width:2000px;text-align:center;top:743.9px;font-size:32px;line-height:32px;color:#e8e4e0;font-weight:bold;">&gt;</div>
<div class="bb" style="left:2097.0px;top:719.5px;width:80.0px;height:80.0px;border-radius:12px;background:#3b3b3b"><div class="bv" style="left:5px;right:5px;top:5px;bottom:5px;border-radius:8px;background:linear-gradient(#9a9898 0,#8a8888 6px,#454343 42%,#1a1a1a 72%,#0b0b0b 86%,#0b0b0b 100%)"></div><div class="bv" style="left:5px;right:5px;top:5px;height:6px;border-radius:8px 8px 5px 5px;background:#c6c2c2"></div><div class="bv" style="left:10px;right:10px;top:10px;bottom:10px;border-radius:3px;background:#0c0b0b"></div></div>
<div class="t" style="left:1137.0px;width:2000px;text-align:center;top:743.9px;font-size:32px;line-height:32px;color:#e8e4e0;font-weight:bold;">&lt;</div>
<svg style="left:0;top:0" width="3383" height="1946"><defs><linearGradient id="kf1" x1="0" y1="0" x2="0" y2="1"><stop offset="0" stop-color="#0e0804"/><stop offset="0.1" stop-color="#200c06"/><stop offset="0.4" stop-color="#5e1806"/><stop offset="0.7" stop-color="#b82a04"/><stop offset="1" stop-color="#f43800"/></linearGradient><linearGradient id="kp1" x1="0" y1="0" x2="0" y2="1"><stop offset="0" stop-color="#f07868" stop-opacity="0"/><stop offset="0.45" stop-color="#f07868" stop-opacity="0"/><stop offset="1" stop-color="#f47a68" stop-opacity="1"/></linearGradient><linearGradient id="ka1" gradientUnits="userSpaceOnUse" x1="0" y1="956" x2="0" y2="1150"><stop offset="0" stop-color="#f06448"/><stop offset="1" stop-color="#cc3418"/></linearGradient></defs><circle cx="160.6" cy="1053" r="97" fill="rgba(0,0,0,0.3)"/><path d="M102.11,1122.71 A91.0,91.0 0 1 1 219.09,1122.71" fill="none" stroke="#4a4a4a" stroke-width="12" stroke-linecap="round"/><path d="M102.11,1122.71 A91.0,91.0 0 0 1 104.57,981.29" fill="none" stroke="url(#ka1)" stroke-width="12" stroke-linecap="round"/><circle cx="160.6" cy="1053" r="69" fill="url(#kf1)"/><circle cx="160.6" cy="1053" r="72.0" fill="none" stroke="rgba(205,192,165,0.48)" stroke-width="6"/><circle cx="160.6" cy="1053" r="70.68" fill="none" stroke="url(#kp1)" stroke-width="2.7"/><line x1="160.6" y1="1053" x2="127.50" y2="1009.08" stroke="#ff3c10" stroke-width="6.6"/><circle cx="127.50" cy="1009.08" r="9.2" fill="#ff3c10"/></svg>
<div class="ab" style="left:57.1px;top:1160.6px;width:207.0px;height:49.0px;border:3px solid #8e9090;background:transparent"></div>
<div class="t" style="left:-839.4px;width:2000px;text-align:center;top:1171.1px;font-size:29px;line-height:29px;color:#ffffff;font-weight:bold;">350.0509949</div>
<div class="t" style="left:-839.4px;width:2000px;text-align:center;top:1226.1px;font-size:30px;line-height:30px;color:#e8e2d8;font-weight:bold;">CUTOFF</div>
<div class="bb" style="left:55.2px;top:1275.0px;width:98.0px;height:51.5px;border-radius:10px;background:#3b3b3b"><div class="bv" style="left:4px;right:4px;top:4px;bottom:4px;border-radius:7px;background:linear-gradient(#9a9898 0,#8a8888 5.5px,#454343 42%,#1a1a1a 72%,#0b0b0b 86%,#0b0b0b 100%)"></div><div class="bv" style="left:4px;right:4px;top:4px;height:5.5px;border-radius:7px 7px 4.5px 4.5px;background:#c6c2c2"></div><div class="bv" style="left:9px;right:9px;top:8.5px;bottom:8px;border-radius:3px;background:#0c0b0b"></div></div>
<div class="t" style="left:-918.8px;width:2000px;text-align:center;top:1290.5px;font-size:25px;line-height:25px;color:#9a9896;font-weight:bold;">&acirc;</div>
<div class="ab" style="left:93.9px;top:1293px;width:15px;height:19px;border:1.3px solid #4a4848"></div>
<div class="ab" style="left:116.0px;top:1293px;width:16px;height:19px;border:1.3px solid #4a4848"></div>
<div class="bb" style="left:168.0px;top:1275.0px;width:98.0px;height:51.5px;border-radius:10px;background:#3b3b3b"><div class="bv" style="left:4px;right:4px;top:4px;bottom:4px;border-radius:7px;background:linear-gradient(#9a9898 0,#8a8888 5.5px,#454343 42%,#1a1a1a 72%,#0b0b0b 86%,#0b0b0b 100%)"></div><div class="bv" style="left:4px;right:4px;top:4px;height:5.5px;border-radius:7px 7px 4.5px 4.5px;background:#c6c2c2"></div><div class="bv" style="left:9px;right:9px;top:8.5px;bottom:8px;border-radius:3px;background:#0c0b0b"></div></div>
<div class="t" style="left:-806.0px;width:2000px;text-align:center;top:1290.5px;font-size:25px;line-height:25px;color:#9a9896;font-weight:bold;">&acirc;</div>
<div class="ab" style="left:206.7px;top:1293px;width:15px;height:19px;border:1.3px solid #4a4848"></div>
<div class="ab" style="left:228.8px;top:1293px;width:16px;height:19px;border:1.3px solid #4a4848"></div>
<svg style="left:0;top:0" width="3383" height="1946"><defs><linearGradient id="kf2" x1="0" y1="0" x2="0" y2="1"><stop offset="0" stop-color="#0e0804"/><stop offset="0.1" stop-color="#200c06"/><stop offset="0.4" stop-color="#5e1806"/><stop offset="0.7" stop-color="#b82a04"/><stop offset="1" stop-color="#f43800"/></linearGradient><linearGradient id="kp2" x1="0" y1="0" x2="0" y2="1"><stop offset="0" stop-color="#f07868" stop-opacity="0"/><stop offset="0.45" stop-color="#f07868" stop-opacity="0"/><stop offset="1" stop-color="#f47a68" stop-opacity="1"/></linearGradient><linearGradient id="ka2" gradientUnits="userSpaceOnUse" x1="0" y1="956" x2="0" y2="1150"><stop offset="0" stop-color="#f06448"/><stop offset="1" stop-color="#cc3418"/></linearGradient></defs><circle cx="430.5" cy="1053" r="97" fill="rgba(0,0,0,0.3)"/><path d="M372.01,1122.71 A91.0,91.0 0 1 1 488.99,1122.71" fill="none" stroke="#4a4a4a" stroke-width="12" stroke-linecap="round"/><path d="M372.01,1122.71 A91.0,91.0 0 1 1 503.18,1107.77" fill="none" stroke="url(#ka2)" stroke-width="12" stroke-linecap="round"/><circle cx="430.5" cy="1053" r="69" fill="url(#kf2)"/><circle cx="430.5" cy="1053" r="72.0" fill="none" stroke="rgba(205,192,165,0.48)" stroke-width="6"/><circle cx="430.5" cy="1053" r="70.68" fill="none" stroke="url(#kp2)" stroke-width="2.7"/><line x1="430.5" y1="1053" x2="474.42" y2="1086.10" stroke="#ff3c10" stroke-width="6.6"/><circle cx="474.42" cy="1086.10" r="9.2" fill="#ff3c10"/></svg>
<div class="ab" style="left:327.0px;top:1160.6px;width:207.0px;height:49.0px;border:3px solid #8e9090;background:transparent"></div>
<div class="t" style="left:-569.5px;width:2000px;text-align:center;top:1171.1px;font-size:29px;line-height:29px;color:#ffffff;font-weight:bold;">0.9674994</div>
<div class="t" style="left:-569.5px;width:2000px;text-align:center;top:1226.1px;font-size:30px;line-height:30px;color:#e8e2d8;font-weight:bold;">RES</div>
<div class="bb" style="left:325.1px;top:1275.0px;width:98.0px;height:51.5px;border-radius:10px;background:#3b3b3b"><div class="bv" style="left:4px;right:4px;top:4px;bottom:4px;border-radius:7px;background:linear-gradient(#9a9898 0,#8a8888 5.5px,#454343 42%,#1a1a1a 72%,#0b0b0b 86%,#0b0b0b 100%)"></div><div class="bv" style="left:4px;right:4px;top:4px;height:5.5px;border-radius:7px 7px 4.5px 4.5px;background:#c6c2c2"></div><div class="bv" style="left:9px;right:9px;top:8.5px;bottom:8px;border-radius:3px;background:#0c0b0b"></div></div>
<div class="t" style="left:-648.9px;width:2000px;text-align:center;top:1290.5px;font-size:25px;line-height:25px;color:#9a9896;font-weight:bold;">&acirc;</div>
<div class="ab" style="left:363.8px;top:1293px;width:15px;height:19px;border:1.3px solid #4a4848"></div>
<div class="ab" style="left:385.9px;top:1293px;width:16px;height:19px;border:1.3px solid #4a4848"></div>
<div class="bb" style="left:437.9px;top:1275.0px;width:98.0px;height:51.5px;border-radius:10px;background:#3b3b3b"><div class="bv" style="left:4px;right:4px;top:4px;bottom:4px;border-radius:7px;background:linear-gradient(#9a9898 0,#8a8888 5.5px,#454343 42%,#1a1a1a 72%,#0b0b0b 86%,#0b0b0b 100%)"></div><div class="bv" style="left:4px;right:4px;top:4px;height:5.5px;border-radius:7px 7px 4.5px 4.5px;background:#c6c2c2"></div><div class="bv" style="left:9px;right:9px;top:8.5px;bottom:8px;border-radius:3px;background:#0c0b0b"></div></div>
<div class="t" style="left:-536.1px;width:2000px;text-align:center;top:1290.5px;font-size:25px;line-height:25px;color:#9a9896;font-weight:bold;">&acirc;</div>
<div class="ab" style="left:476.6px;top:1293px;width:15px;height:19px;border:1.3px solid #4a4848"></div>
<div class="ab" style="left:498.7px;top:1293px;width:16px;height:19px;border:1.3px solid #4a4848"></div>
<svg style="left:0;top:0" width="3383" height="1946"><defs><linearGradient id="kf3" x1="0" y1="0" x2="0" y2="1"><stop offset="0" stop-color="#0e0804"/><stop offset="0.1" stop-color="#200c06"/><stop offset="0.4" stop-color="#5e1806"/><stop offset="0.7" stop-color="#b82a04"/><stop offset="1" stop-color="#f43800"/></linearGradient><linearGradient id="kp3" x1="0" y1="0" x2="0" y2="1"><stop offset="0" stop-color="#f07868" stop-opacity="0"/><stop offset="0.45" stop-color="#f07868" stop-opacity="0"/><stop offset="1" stop-color="#f47a68" stop-opacity="1"/></linearGradient><linearGradient id="ka3" gradientUnits="userSpaceOnUse" x1="0" y1="956" x2="0" y2="1150"><stop offset="0" stop-color="#f06448"/><stop offset="1" stop-color="#cc3418"/></linearGradient></defs><circle cx="700.8" cy="1053" r="97" fill="rgba(0,0,0,0.3)"/><path d="M642.31,1122.71 A91.0,91.0 0 1 1 759.29,1122.71" fill="none" stroke="#4a4a4a" stroke-width="12" stroke-linecap="round"/><path d="M642.31,1122.71 A91.0,91.0 0 1 1 775.34,1000.80" fill="none" stroke="url(#ka3)" stroke-width="12" stroke-linecap="round"/><circle cx="700.8" cy="1053" r="69" fill="url(#kf3)"/><circle cx="700.8" cy="1053" r="72.0" fill="none" stroke="rgba(205,192,165,0.48)" stroke-width="6"/><circle cx="700.8" cy="1053" r="70.68" fill="none" stroke="url(#kp3)" stroke-width="2.7"/><line x1="700.8" y1="1053" x2="745.85" y2="1021.45" stroke="#ff3c10" stroke-width="6.6"/><circle cx="745.85" cy="1021.45" r="9.2" fill="#ff3c10"/></svg>
<div class="ab" style="left:597.3px;top:1160.6px;width:207.0px;height:49.0px;border:3px solid #8e9090;background:transparent"></div>
<div class="t" style="left:-299.2px;width:2000px;text-align:center;top:1171.1px;font-size:29px;line-height:29px;color:#ffffff;font-weight:bold;">0.4765473</div>
<div class="t" style="left:-299.2px;width:2000px;text-align:center;top:1226.1px;font-size:30px;line-height:30px;color:#e8e2d8;font-weight:bold;">ENV MOD</div>
<div class="bb" style="left:595.4px;top:1275.0px;width:98.0px;height:51.5px;border-radius:10px;background:#3b3b3b"><div class="bv" style="left:4px;right:4px;top:4px;bottom:4px;border-radius:7px;background:linear-gradient(#9a9898 0,#8a8888 5.5px,#454343 42%,#1a1a1a 72%,#0b0b0b 86%,#0b0b0b 100%)"></div><div class="bv" style="left:4px;right:4px;top:4px;height:5.5px;border-radius:7px 7px 4.5px 4.5px;background:#c6c2c2"></div><div class="bv" style="left:9px;right:9px;top:8.5px;bottom:8px;border-radius:3px;background:#0c0b0b"></div></div>
<div class="t" style="left:-378.6px;width:2000px;text-align:center;top:1290.5px;font-size:25px;line-height:25px;color:#9a9896;font-weight:bold;">&acirc;</div>
<div class="ab" style="left:634.1px;top:1293px;width:15px;height:19px;border:1.3px solid #4a4848"></div>
<div class="ab" style="left:656.2px;top:1293px;width:16px;height:19px;border:1.3px solid #4a4848"></div>
<div class="bb" style="left:708.2px;top:1275.0px;width:98.0px;height:51.5px;border-radius:10px;background:#3b3b3b"><div class="bv" style="left:4px;right:4px;top:4px;bottom:4px;border-radius:7px;background:linear-gradient(#9a9898 0,#8a8888 5.5px,#454343 42%,#1a1a1a 72%,#0b0b0b 86%,#0b0b0b 100%)"></div><div class="bv" style="left:4px;right:4px;top:4px;height:5.5px;border-radius:7px 7px 4.5px 4.5px;background:#c6c2c2"></div><div class="bv" style="left:9px;right:9px;top:8.5px;bottom:8px;border-radius:3px;background:#0c0b0b"></div></div>
<div class="t" style="left:-265.8px;width:2000px;text-align:center;top:1290.5px;font-size:25px;line-height:25px;color:#9a9896;font-weight:bold;">&acirc;</div>
<div class="ab" style="left:746.9px;top:1293px;width:15px;height:19px;border:1.3px solid #4a4848"></div>
<div class="ab" style="left:769.0px;top:1293px;width:16px;height:19px;border:1.3px solid #4a4848"></div>
<svg style="left:0;top:0" width="3383" height="1946"><defs><linearGradient id="kf4" x1="0" y1="0" x2="0" y2="1"><stop offset="0" stop-color="#0e0804"/><stop offset="0.1" stop-color="#200c06"/><stop offset="0.4" stop-color="#5e1806"/><stop offset="0.7" stop-color="#b82a04"/><stop offset="1" stop-color="#f43800"/></linearGradient><linearGradient id="kp4" x1="0" y1="0" x2="0" y2="1"><stop offset="0" stop-color="#f07868" stop-opacity="0"/><stop offset="0.45" stop-color="#f07868" stop-opacity="0"/><stop offset="1" stop-color="#f47a68" stop-opacity="1"/></linearGradient><linearGradient id="ka4" gradientUnits="userSpaceOnUse" x1="0" y1="956" x2="0" y2="1150"><stop offset="0" stop-color="#f06448"/><stop offset="1" stop-color="#cc3418"/></linearGradient></defs><circle cx="970.4" cy="1053" r="97" fill="rgba(0,0,0,0.3)"/><path d="M911.91,1122.71 A91.0,91.0 0 1 1 1028.89,1122.71" fill="none" stroke="#4a4a4a" stroke-width="12" stroke-linecap="round"/><path d="M911.91,1122.71 A91.0,91.0 0 0 1 908.34,986.45" fill="none" stroke="url(#ka4)" stroke-width="12" stroke-linecap="round"/><circle cx="970.4" cy="1053" r="69" fill="url(#kf4)"/><circle cx="970.4" cy="1053" r="72.0" fill="none" stroke="rgba(205,192,165,0.48)" stroke-width="6"/><circle cx="970.4" cy="1053" r="70.68" fill="none" stroke="url(#kp4)" stroke-width="2.7"/><line x1="970.4" y1="1053" x2="932.19" y2="1013.44" stroke="#ff3c10" stroke-width="6.6"/><circle cx="932.19" cy="1013.44" r="9.2" fill="#ff3c10"/></svg>
<div class="ab" style="left:866.9px;top:1160.6px;width:207.0px;height:49.0px;border:3px solid #8e9090;background:transparent"></div>
<div class="t" style="left:-29.6px;width:2000px;text-align:center;top:1171.1px;font-size:29px;line-height:29px;color:#ffffff;font-weight:bold;">0.3114604</div>
<div class="t" style="left:-29.6px;width:2000px;text-align:center;top:1226.1px;font-size:30px;line-height:30px;color:#e8e2d8;font-weight:bold;">DECAY</div>
<div class="bb" style="left:865.0px;top:1275.0px;width:98.0px;height:51.5px;border-radius:10px;background:#3b3b3b"><div class="bv" style="left:4px;right:4px;top:4px;bottom:4px;border-radius:7px;background:linear-gradient(#9a9898 0,#8a8888 5.5px,#454343 42%,#1a1a1a 72%,#0b0b0b 86%,#0b0b0b 100%)"></div><div class="bv" style="left:4px;right:4px;top:4px;height:5.5px;border-radius:7px 7px 4.5px 4.5px;background:#c6c2c2"></div><div class="bv" style="left:9px;right:9px;top:8.5px;bottom:8px;border-radius:3px;background:#0c0b0b"></div></div>
<div class="t" style="left:-109.0px;width:2000px;text-align:center;top:1290.5px;font-size:25px;line-height:25px;color:#9a9896;font-weight:bold;">&acirc;</div>
<div class="ab" style="left:903.7px;top:1293px;width:15px;height:19px;border:1.3px solid #4a4848"></div>
<div class="ab" style="left:925.8px;top:1293px;width:16px;height:19px;border:1.3px solid #4a4848"></div>
<div class="bb" style="left:977.8px;top:1275.0px;width:98.0px;height:51.5px;border-radius:10px;background:#3b3b3b"><div class="bv" style="left:4px;right:4px;top:4px;bottom:4px;border-radius:7px;background:linear-gradient(#9a9898 0,#8a8888 5.5px,#454343 42%,#1a1a1a 72%,#0b0b0b 86%,#0b0b0b 100%)"></div><div class="bv" style="left:4px;right:4px;top:4px;height:5.5px;border-radius:7px 7px 4.5px 4.5px;background:#c6c2c2"></div><div class="bv" style="left:9px;right:9px;top:8.5px;bottom:8px;border-radius:3px;background:#0c0b0b"></div></div>
<div class="t" style="left:3.8px;width:2000px;text-align:center;top:1290.5px;font-size:25px;line-height:25px;color:#9a9896;font-weight:bold;">&acirc;</div>
<div class="ab" style="left:1016.5px;top:1293px;width:15px;height:19px;border:1.3px solid #4a4848"></div>
<div class="ab" style="left:1038.6px;top:1293px;width:16px;height:19px;border:1.3px solid #4a4848"></div>
<svg style="left:0;top:0" width="3383" height="1946"><defs><linearGradient id="kf5" x1="0" y1="0" x2="0" y2="1"><stop offset="0" stop-color="#0e0804"/><stop offset="0.1" stop-color="#200c06"/><stop offset="0.4" stop-color="#5e1806"/><stop offset="0.7" stop-color="#b82a04"/><stop offset="1" stop-color="#f43800"/></linearGradient><linearGradient id="kp5" x1="0" y1="0" x2="0" y2="1"><stop offset="0" stop-color="#f07868" stop-opacity="0"/><stop offset="0.45" stop-color="#f07868" stop-opacity="0"/><stop offset="1" stop-color="#f47a68" stop-opacity="1"/></linearGradient><linearGradient id="ka5" gradientUnits="userSpaceOnUse" x1="0" y1="956" x2="0" y2="1150"><stop offset="0" stop-color="#f06448"/><stop offset="1" stop-color="#cc3418"/></linearGradient></defs><circle cx="1240.4" cy="1053" r="97" fill="rgba(0,0,0,0.3)"/><path d="M1181.91,1122.71 A91.0,91.0 0 1 1 1298.89,1122.71" fill="none" stroke="#4a4a4a" stroke-width="12" stroke-linecap="round"/><path d="M1181.91,1122.71 A91.0,91.0 0 1 1 1298.89,1122.71" fill="none" stroke="url(#ka5)" stroke-width="12" stroke-linecap="round"/><circle cx="1240.4" cy="1053" r="69" fill="url(#kf5)"/><circle cx="1240.4" cy="1053" r="72.0" fill="none" stroke="rgba(205,192,165,0.48)" stroke-width="6"/><circle cx="1240.4" cy="1053" r="70.68" fill="none" stroke="url(#kp5)" stroke-width="2.7"/><line x1="1240.4" y1="1053" x2="1271.95" y2="1098.05" stroke="#ff3c10" stroke-width="6.6"/><circle cx="1271.95" cy="1098.05" r="9.2" fill="#ff3c10"/></svg>
<div class="ab" style="left:1136.9px;top:1160.6px;width:207.0px;height:49.0px;border:3px solid #8e9090;background:transparent"></div>
<div class="t" style="left:240.4px;width:2000px;text-align:center;top:1171.1px;font-size:29px;line-height:29px;color:#ffffff;font-weight:bold;">1.0000000</div>
<div class="t" style="left:240.4px;width:2000px;text-align:center;top:1226.1px;font-size:30px;line-height:30px;color:#e8e2d8;font-weight:bold;">ACCENT</div>
<div class="bb" style="left:1135.0px;top:1275.0px;width:98.0px;height:51.5px;border-radius:10px;background:#3b3b3b"><div class="bv" style="left:4px;right:4px;top:4px;bottom:4px;border-radius:7px;background:linear-gradient(#9a9898 0,#8a8888 5.5px,#454343 42%,#1a1a1a 72%,#0b0b0b 86%,#0b0b0b 100%)"></div><div class="bv" style="left:4px;right:4px;top:4px;height:5.5px;border-radius:7px 7px 4.5px 4.5px;background:#c6c2c2"></div><div class="bv" style="left:9px;right:9px;top:8.5px;bottom:8px;border-radius:3px;background:#0c0b0b"></div></div>
<div class="t" style="left:161.0px;width:2000px;text-align:center;top:1290.5px;font-size:25px;line-height:25px;color:#9a9896;font-weight:bold;">&acirc;</div>
<div class="ab" style="left:1173.7px;top:1293px;width:15px;height:19px;border:1.3px solid #4a4848"></div>
<div class="ab" style="left:1195.8px;top:1293px;width:16px;height:19px;border:1.3px solid #4a4848"></div>
<div class="bb" style="left:1247.8px;top:1275.0px;width:98.0px;height:51.5px;border-radius:10px;background:#3b3b3b"><div class="bv" style="left:4px;right:4px;top:4px;bottom:4px;border-radius:7px;background:linear-gradient(#9a9898 0,#8a8888 5.5px,#454343 42%,#1a1a1a 72%,#0b0b0b 86%,#0b0b0b 100%)"></div><div class="bv" style="left:4px;right:4px;top:4px;height:5.5px;border-radius:7px 7px 4.5px 4.5px;background:#c6c2c2"></div><div class="bv" style="left:9px;right:9px;top:8.5px;bottom:8px;border-radius:3px;background:#0c0b0b"></div></div>
<div class="t" style="left:273.8px;width:2000px;text-align:center;top:1290.5px;font-size:25px;line-height:25px;color:#9a9896;font-weight:bold;">&acirc;</div>
<div class="ab" style="left:1286.5px;top:1293px;width:15px;height:19px;border:1.3px solid #4a4848"></div>
<div class="ab" style="left:1308.6px;top:1293px;width:16px;height:19px;border:1.3px solid #4a4848"></div>
<svg style="left:0;top:0" width="3383" height="1946"><defs><linearGradient id="kf6" x1="0" y1="0" x2="0" y2="1"><stop offset="0" stop-color="#0e0804"/><stop offset="0.1" stop-color="#200c06"/><stop offset="0.4" stop-color="#5e1806"/><stop offset="0.7" stop-color="#b82a04"/><stop offset="1" stop-color="#f43800"/></linearGradient><linearGradient id="kp6" x1="0" y1="0" x2="0" y2="1"><stop offset="0" stop-color="#f07868" stop-opacity="0"/><stop offset="0.45" stop-color="#f07868" stop-opacity="0"/><stop offset="1" stop-color="#f47a68" stop-opacity="1"/></linearGradient><linearGradient id="ka6" gradientUnits="userSpaceOnUse" x1="0" y1="956" x2="0" y2="1150"><stop offset="0" stop-color="#f06448"/><stop offset="1" stop-color="#cc3418"/></linearGradient></defs><circle cx="1510.5" cy="1053" r="97" fill="rgba(0,0,0,0.3)"/><path d="M1452.01,1122.71 A91.0,91.0 0 1 1 1568.99,1122.71" fill="none" stroke="#4a4a4a" stroke-width="12" stroke-linecap="round"/><path d="M1452.01,1122.71 A91.0,91.0 0 0 1 1512.09,962.01" fill="none" stroke="url(#ka6)" stroke-width="12" stroke-linecap="round"/><circle cx="1510.5" cy="1053" r="69" fill="url(#kf6)"/><circle cx="1510.5" cy="1053" r="72.0" fill="none" stroke="rgba(205,192,165,0.48)" stroke-width="6"/><circle cx="1510.5" cy="1053" r="70.68" fill="none" stroke="url(#kp6)" stroke-width="2.7"/><line x1="1510.5" y1="1053" x2="1510.50" y2="998.00" stroke="#ff3c10" stroke-width="6.6"/><circle cx="1510.50" cy="998.00" r="9.2" fill="#ff3c10"/></svg>
<div class="ab" style="left:1407.0px;top:1160.6px;width:207.0px;height:49.0px;border:3px solid #8e9090;background:transparent"></div>
<div class="t" style="left:510.5px;width:2000px;text-align:center;top:1171.1px;font-size:29px;line-height:29px;color:#ffffff;font-weight:bold;">0.0706784</div>
<div class="t" style="left:510.5px;width:2000px;text-align:center;top:1226.1px;font-size:30px;line-height:30px;color:#e8e2d8;font-weight:bold;">SLIDE</div>
<div class="bb" style="left:1405.1px;top:1275.0px;width:98.0px;height:51.5px;border-radius:10px;background:#3b3b3b"><div class="bv" style="left:4px;right:4px;top:4px;bottom:4px;border-radius:7px;background:linear-gradient(#9a9898 0,#8a8888 5.5px,#454343 42%,#1a1a1a 72%,#0b0b0b 86%,#0b0b0b 100%)"></div><div class="bv" style="left:4px;right:4px;top:4px;height:5.5px;border-radius:7px 7px 4.5px 4.5px;background:#c6c2c2"></div><div class="bv" style="left:9px;right:9px;top:8.5px;bottom:8px;border-radius:3px;background:#0c0b0b"></div></div>
<div class="t" style="left:431.1px;width:2000px;text-align:center;top:1290.5px;font-size:25px;line-height:25px;color:#9a9896;font-weight:bold;">&acirc;</div>
<div class="ab" style="left:1443.8px;top:1293px;width:15px;height:19px;border:1.3px solid #4a4848"></div>
<div class="ab" style="left:1465.9px;top:1293px;width:16px;height:19px;border:1.3px solid #4a4848"></div>
<div class="bb" style="left:1517.9px;top:1275.0px;width:98.0px;height:51.5px;border-radius:10px;background:#3b3b3b"><div class="bv" style="left:4px;right:4px;top:4px;bottom:4px;border-radius:7px;background:linear-gradient(#9a9898 0,#8a8888 5.5px,#454343 42%,#1a1a1a 72%,#0b0b0b 86%,#0b0b0b 100%)"></div><div class="bv" style="left:4px;right:4px;top:4px;height:5.5px;border-radius:7px 7px 4.5px 4.5px;background:#c6c2c2"></div><div class="bv" style="left:9px;right:9px;top:8.5px;bottom:8px;border-radius:3px;background:#0c0b0b"></div></div>
<div class="t" style="left:543.9px;width:2000px;text-align:center;top:1290.5px;font-size:25px;line-height:25px;color:#9a9896;font-weight:bold;">&acirc;</div>
<div class="ab" style="left:1556.6px;top:1293px;width:15px;height:19px;border:1.3px solid #4a4848"></div>
<div class="ab" style="left:1578.7px;top:1293px;width:16px;height:19px;border:1.3px solid #4a4848"></div>
<svg style="left:0;top:0" width="3383" height="1946"><defs><linearGradient id="kf7" x1="0" y1="0" x2="0" y2="1"><stop offset="0" stop-color="#0e0804"/><stop offset="0.1" stop-color="#200c06"/><stop offset="0.4" stop-color="#5e1806"/><stop offset="0.7" stop-color="#b82a04"/><stop offset="1" stop-color="#f43800"/></linearGradient><linearGradient id="kp7" x1="0" y1="0" x2="0" y2="1"><stop offset="0" stop-color="#f07868" stop-opacity="0"/><stop offset="0.45" stop-color="#f07868" stop-opacity="0"/><stop offset="1" stop-color="#f47a68" stop-opacity="1"/></linearGradient><linearGradient id="ka7" gradientUnits="userSpaceOnUse" x1="0" y1="956" x2="0" y2="1150"><stop offset="0" stop-color="#f06448"/><stop offset="1" stop-color="#cc3418"/></linearGradient></defs><circle cx="1851" cy="1053" r="97" fill="rgba(0,0,0,0.3)"/><path d="M1792.51,1122.71 A91.0,91.0 0 1 1 1909.49,1122.71" fill="none" stroke="#4a4a4a" stroke-width="12" stroke-linecap="round"/><path d="M1792.51,1122.71 A91.0,91.0 0 0 1 1851.00,962.00" fill="none" stroke="url(#ka7)" stroke-width="12" stroke-linecap="round"/><circle cx="1851" cy="1053" r="69" fill="url(#kf7)"/><circle cx="1851" cy="1053" r="72.0" fill="none" stroke="rgba(205,192,165,0.48)" stroke-width="6"/><circle cx="1851" cy="1053" r="70.68" fill="none" stroke="url(#kp7)" stroke-width="2.7"/><line x1="1851" y1="1053" x2="1851.00" y2="998.00" stroke="#ff3c10" stroke-width="6.6"/><circle cx="1851.00" cy="998.00" r="9.2" fill="#ff3c10"/></svg>
<div class="ab" style="left:1746.8px;top:1161.0px;width:206.0px;height:48.0px;border:3px solid #8e9090;background:transparent"></div>
<div class="t" style="left:849.8px;width:2000px;text-align:center;top:1171.0px;font-size:29px;line-height:29px;color:#ffffff;font-weight:bold;">0</div>
<div class="t" style="left:851.0px;width:2000px;text-align:center;top:1226.6px;font-size:30px;line-height:30px;color:#e8e2d8;font-weight:bold;">TUNE</div>
<div class="t" style="left:1253.0px;width:2000px;text-align:center;top:991.9px;font-size:32px;line-height:32px;color:#e8e2d8;font-weight:bold;">WAVE</div>
<div class="ab" style="left:2065px;top:1044px;width:376px;height:90px;border:4px solid #3a3a3a;border-radius:12px;background:#1a1919"></div>
<div class="t" style="left:2089.0px;top:1074.6px;font-size:30px;line-height:30px;color:#e2deda;font-weight:bold;">Sawtooth</div>
<svg style="left:2337px;top:1079px" width="58" height="28"><polyline points="3,6 29,22 55,6" fill="none" stroke="#12b232" stroke-width="7"/></svg>
<div class="bb" style="left:2087.0px;top:1261.0px;width:329.0px;height:77.0px;border-radius:10px;background:#3b3b3b"><div class="bv" style="left:4px;right:4px;top:4px;bottom:4px;border-radius:7px;background:linear-gradient(#9a9898 0,#8a8888 6px,#454343 42%,#1a1a1a 72%,#0b0b0b 86%,#0b0b0b 100%)"></div><div class="bv" style="left:4px;right:4px;top:4px;height:6px;border-radius:7px 7px 5px 5px;background:#c6c2c2"></div><div class="bv" style="left:9px;right:9px;top:9px;bottom:9px;border-radius:3px;background:#0c0b0b"></div></div>
<div class="t" style="left:1251.5px;width:2000px;text-align:center;top:1284.3px;font-size:32px;line-height:32px;color:#ece8e4;font-weight:bold;">RST 0%</div>
<div class="ab" style="left:2596px;top:944.5px;width:769px;height:445.5px;border:4px solid #3c3a38;border-radius:17px;background:#1a1918;overflow:hidden"><div class="ab" style="left:0;top:0;width:100%;height:59.0px;background:linear-gradient(#d4604c,#b44832 50%,#942a16)"></div></div>
<div class="t" style="left:1980.5px;width:2000px;text-align:center;top:963.0px;font-size:29px;line-height:29px;color:#e8e0da;font-weight:bold;">DISTORTION</div>
<div class="bb" style="left:2614.0px;top:1015.5px;width:298.0px;height:80.5px;border-radius:12px;background:#3b3b3b"><div class="bv" style="left:5px;right:5px;top:5px;bottom:5px;border-radius:8px;background:linear-gradient(#9a9898 0,#8a8888 7px,#454343 42%,#1a1a1a 72%,#0b0b0b 86%,#0b0b0b 100%)"></div><div class="bv" style="left:5px;right:5px;top:5px;height:7px;border-radius:8px 8px 6px 6px;background:#c6c2c2"></div><div class="bv" style="left:10px;right:10px;top:11px;bottom:11px;border-radius:3px;background:#c82a10"></div></div>
<div class="t" style="left:1763.0px;width:2000px;text-align:center;top:1039.5px;font-size:32.5px;line-height:32.5px;color:#ffffff;font-weight:bold;">DIST ON</div>
<div class="t" style="left:2633.0px;top:1117.6px;font-size:30px;line-height:30px;color:#e8e2d8;font-weight:bold;">TYPE</div>
<div class="ab" style="left:2614px;top:1157.5px;width:298.5px;height:74px;border:4px solid #3a3a3a;border-radius:12px;background:#1a1918"></div>
<div class="t" style="left:2636.5px;top:1179.6px;font-size:30px;line-height:30px;color:#e2deda;font-weight:bold;">TANH</div>
<svg style="left:2809px;top:1183px" width="58" height="28"><polyline points="3,5 28.5,21 54,5" fill="none" stroke="#12b232" stroke-width="7"/></svg>
<svg style="left:0;top:0" width="3383" height="1946"><defs><linearGradient id="kf8" x1="0" y1="0" x2="0" y2="1"><stop offset="0" stop-color="#0e0804"/><stop offset="0.1" stop-color="#200c06"/><stop offset="0.4" stop-color="#5e1806"/><stop offset="0.7" stop-color="#b82a04"/><stop offset="1" stop-color="#f43800"/></linearGradient><linearGradient id="kp8" x1="0" y1="0" x2="0" y2="1"><stop offset="0" stop-color="#f07868" stop-opacity="0"/><stop offset="0.45" stop-color="#f07868" stop-opacity="0"/><stop offset="1" stop-color="#f47a68" stop-opacity="1"/></linearGradient><linearGradient id="ka8" gradientUnits="userSpaceOnUse" x1="0" y1="993" x2="0" y2="1159"><stop offset="0" stop-color="#f06448"/><stop offset="1" stop-color="#cc3418"/></linearGradient></defs><circle cx="3033" cy="1076" r="83" fill="rgba(0,0,0,0.28)"/><path d="M2983.83,1134.60 A76.5,76.5 0 1 1 3082.17,1134.60" fill="none" stroke="#4a4846" stroke-width="13" stroke-linecap="round"/><path d="M2983.83,1134.60 A76.5,76.5 0 0 1 3033.00,999.50" fill="none" stroke="url(#ka8)" stroke-width="13" stroke-linecap="round"/><circle cx="3033" cy="1076" r="55.6" fill="url(#kf8)"/><circle cx="3033" cy="1076" r="58.3" fill="none" stroke="rgba(205,192,165,0.48)" stroke-width="5"/><circle cx="3033" cy="1076" r="57.0" fill="none" stroke="url(#kp8)" stroke-width="2.25"/><line x1="3033" y1="1076" x2="3033.00" y2="1036.00" stroke="#ff3c10" stroke-width="7.5"/><circle cx="3033.00" cy="1036.00" r="9.3" fill="#ff3c10"/></svg>
<svg style="left:0;top:0" width="3383" height="1946"><defs><linearGradient id="kf9" x1="0" y1="0" x2="0" y2="1"><stop offset="0" stop-color="#0e0804"/><stop offset="0.1" stop-color="#200c06"/><stop offset="0.4" stop-color="#5e1806"/><stop offset="0.7" stop-color="#b82a04"/><stop offset="1" stop-color="#f43800"/></linearGradient><linearGradient id="kp9" x1="0" y1="0" x2="0" y2="1"><stop offset="0" stop-color="#f07868" stop-opacity="0"/><stop offset="0.45" stop-color="#f07868" stop-opacity="0"/><stop offset="1" stop-color="#f47a68" stop-opacity="1"/></linearGradient><linearGradient id="ka9" gradientUnits="userSpaceOnUse" x1="0" y1="993" x2="0" y2="1159"><stop offset="0" stop-color="#f06448"/><stop offset="1" stop-color="#cc3418"/></linearGradient></defs><circle cx="3251" cy="1076" r="83" fill="rgba(0,0,0,0.28)"/><path d="M3201.83,1134.60 A76.5,76.5 0 1 1 3300.17,1134.60" fill="none" stroke="#4a4846" stroke-width="13" stroke-linecap="round"/><path d="M3201.83,1134.60 A76.5,76.5 0 1 1 3315.16,1034.34" fill="none" stroke="url(#ka9)" stroke-width="13" stroke-linecap="round"/><circle cx="3251" cy="1076" r="55.6" fill="url(#kf9)"/><circle cx="3251" cy="1076" r="58.3" fill="none" stroke="rgba(205,192,165,0.48)" stroke-width="5"/><circle cx="3251" cy="1076" r="57.0" fill="none" stroke="url(#kp9)" stroke-width="2.25"/><line x1="3251" y1="1076" x2="3285.11" y2="1055.10" stroke="#ff3c10" stroke-width="7.5"/><circle cx="3285.11" cy="1055.10" r="9.3" fill="#ff3c10"/></svg>
<div class="ab" style="left:2928.6px;top:1169.0px;width:205.0px;height:47.5px;border:3px solid #8e9090;background:transparent"></div>
<div class="t" style="left:2031.1px;width:2000px;text-align:center;top:1178.7px;font-size:29px;line-height:29px;color:#ffffff;font-weight:bold;">0.50</div>
<div class="ab" style="left:3154.0px;top:1169.0px;width:193.6px;height:47.5px;border:3px solid #8e9090;background:transparent"></div>
<div class="t" style="left:2250.8px;width:2000px;text-align:center;top:1178.7px;font-size:29px;line-height:29px;color:#ffffff;font-weight:bold;">0.70</div>
<div class="t" style="left:2032.5px;width:2000px;text-align:center;top:1218.3px;font-size:30px;line-height:30px;color:#e8e2d8;font-weight:bold;">AMOUNT</div>
<div class="t" style="left:2250.5px;width:2000px;text-align:center;top:1218.3px;font-size:30px;line-height:30px;color:#e8e2d8;font-weight:bold;">DIST VOL</div>
<div class="ab" style="left:38px;top:1444.7px;width:867px;height:295.79999999999995px;border:4px solid #3c3a38;border-radius:17px;background:#1a1918;overflow:hidden"><div class="ab" style="left:0;top:0;width:100%;height:58.299999999999955px;background:linear-gradient(#d4604c,#b44832 50%,#942a16)"></div></div>
<div class="t" style="left:-528.5px;width:2000px;text-align:center;top:1460.9px;font-size:29px;line-height:29px;color:#e8e0da;font-weight:bold;">REVERB</div>
<svg style="left:0;top:0" width="3383" height="1946"><defs><linearGradient id="kf10" x1="0" y1="0" x2="0" y2="1"><stop offset="0" stop-color="#0e0804"/><stop offset="0.1" stop-color="#200c06"/><stop offset="0.4" stop-color="#5e1806"/><stop offset="0.7" stop-color="#b82a04"/><stop offset="1" stop-color="#f43800"/></linearGradient><linearGradient id="kp10" x1="0" y1="0" x2="0" y2="1"><stop offset="0" stop-color="#f07868" stop-opacity="0"/><stop offset="0.45" stop-color="#f07868" stop-opacity="0"/><stop offset="1" stop-color="#f47a68" stop-opacity="1"/></linearGradient><linearGradient id="ka10" gradientUnits="userSpaceOnUse" x1="0" y1="1476" x2="0" y2="1606"><stop offset="0" stop-color="#f06448"/><stop offset="1" stop-color="#cc3418"/></linearGradient></defs><circle cx="397.3" cy="1541" r="65" fill="rgba(0,0,0,0.45)"/><path d="M359.70,1585.81 A58.5,58.5 0 1 1 434.90,1585.81" fill="none" stroke="#4a4846" stroke-width="13" stroke-linecap="round"/><path d="M359.70,1585.81 A58.5,58.5 0 0 1 374.44,1487.15" fill="none" stroke="url(#ka10)" stroke-width="13" stroke-linecap="round"/><circle cx="397.3" cy="1541" r="37.6" fill="url(#kf10)"/><circle cx="397.3" cy="1541" r="39.900000000000006" fill="none" stroke="rgba(205,192,165,0.48)" stroke-width="4.6"/><circle cx="397.3" cy="1541" r="38.888" fill="none" stroke="url(#kp10)" stroke-width="2.07"/><line x1="397.3" y1="1541" x2="388.52" y2="1521.92" stroke="#ff3c10" stroke-width="7"/><circle cx="388.52" cy="1521.92" r="9.3" fill="#ff3c10"/></svg>
<svg style="left:0;top:0" width="3383" height="1946"><defs><linearGradient id="kf11" x1="0" y1="0" x2="0" y2="1"><stop offset="0" stop-color="#0e0804"/><stop offset="0.1" stop-color="#200c06"/><stop offset="0.4" stop-color="#5e1806"/><stop offset="0.7" stop-color="#b82a04"/><stop offset="1" stop-color="#f43800"/></linearGradient><linearGradient id="kp11" x1="0" y1="0" x2="0" y2="1"><stop offset="0" stop-color="#f07868" stop-opacity="0"/><stop offset="0.45" stop-color="#f07868" stop-opacity="0"/><stop offset="1" stop-color="#f47a68" stop-opacity="1"/></linearGradient><linearGradient id="ka11" gradientUnits="userSpaceOnUse" x1="0" y1="1476" x2="0" y2="1606"><stop offset="0" stop-color="#f06448"/><stop offset="1" stop-color="#cc3418"/></linearGradient></defs><circle cx="614" cy="1541" r="65" fill="rgba(0,0,0,0.45)"/><path d="M576.40,1585.81 A58.5,58.5 0 1 1 651.60,1585.81" fill="none" stroke="#4a4846" stroke-width="13" stroke-linecap="round"/><path d="M576.40,1585.81 A58.5,58.5 0 0 1 614.00,1482.50" fill="none" stroke="url(#ka11)" stroke-width="13" stroke-linecap="round"/><circle cx="614" cy="1541" r="37.6" fill="url(#kf11)"/><circle cx="614" cy="1541" r="39.900000000000006" fill="none" stroke="rgba(205,192,165,0.48)" stroke-width="4.6"/><circle cx="614" cy="1541" r="38.888" fill="none" stroke="url(#kp11)" stroke-width="2.07"/><line x1="614" y1="1541" x2="614.00" y2="1520.00" stroke="#ff3c10" stroke-width="7"/><circle cx="614.00" cy="1520.00" r="9.3" fill="#ff3c10"/></svg>
<svg style="left:0;top:0" width="3383" height="1946"><defs><linearGradient id="kf12" x1="0" y1="0" x2="0" y2="1"><stop offset="0" stop-color="#0e0804"/><stop offset="0.1" stop-color="#200c06"/><stop offset="0.4" stop-color="#5e1806"/><stop offset="0.7" stop-color="#b82a04"/><stop offset="1" stop-color="#f43800"/></linearGradient><linearGradient id="kp12" x1="0" y1="0" x2="0" y2="1"><stop offset="0" stop-color="#f07868" stop-opacity="0"/><stop offset="0.45" stop-color="#f07868" stop-opacity="0"/><stop offset="1" stop-color="#f47a68" stop-opacity="1"/></linearGradient><linearGradient id="ka12" gradientUnits="userSpaceOnUse" x1="0" y1="1476" x2="0" y2="1606"><stop offset="0" stop-color="#f06448"/><stop offset="1" stop-color="#cc3418"/></linearGradient></defs><circle cx="801" cy="1541" r="65" fill="rgba(0,0,0,0.45)"/><path d="M763.40,1585.81 A58.5,58.5 0 1 1 838.60,1585.81" fill="none" stroke="#4a4846" stroke-width="13" stroke-linecap="round"/><path d="M763.40,1585.81 A58.5,58.5 0 0 1 742.64,1545.08" fill="none" stroke="url(#ka12)" stroke-width="13" stroke-linecap="round"/><circle cx="801" cy="1541" r="37.6" fill="url(#kf12)"/><circle cx="801" cy="1541" r="39.900000000000006" fill="none" stroke="rgba(205,192,165,0.48)" stroke-width="4.6"/><circle cx="801" cy="1541" r="38.888" fill="none" stroke="url(#kp12)" stroke-width="2.07"/><line x1="801" y1="1541" x2="780.32" y2="1544.65" stroke="#ff3c10" stroke-width="7"/><circle cx="780.32" cy="1544.65" r="9.3" fill="#ff3c10"/></svg>
<div class="bb" style="left:56.3px;top:1514.5px;width:215.5px;height:72.5px;border-radius:12px;background:#3b3b3b"><div class="bv" style="left:5px;right:5px;top:5px;bottom:5px;border-radius:8px;background:linear-gradient(#9a9898 0,#8a8888 7px,#454343 42%,#1a1a1a 72%,#0b0b0b 86%,#0b0b0b 100%)"></div><div class="bv" style="left:5px;right:5px;top:5px;height:7px;border-radius:8px 8px 6px 6px;background:#c6c2c2"></div><div class="bv" style="left:10px;right:10px;top:11px;bottom:11px;border-radius:3px;background:#c82a10"></div></div>
<div class="t" style="left:-836.0px;width:2000px;text-align:center;top:1534.2px;font-size:32.5px;line-height:32.5px;color:#ffffff;font-weight:bold;">REV ON</div>
<div class="t" style="left:-836.0px;width:2000px;text-align:center;top:1601.6px;font-size:30px;line-height:30px;color:#e8e2d8;font-weight:bold;">ON / OFF</div>
<div class="ab" style="left:296.0px;top:1614.4px;width:201.7px;height:48.3px;border:3px solid #8e9090;background:transparent"></div>
<div class="t" style="left:-603.1px;width:2000px;text-align:center;top:1624.5px;font-size:29px;line-height:29px;color:#ffffff;font-weight:bold;">0.42</div>
<div class="ab" style="left:513.0px;top:1614.4px;width:201.0px;height:48.3px;border:3px solid #8e9090;background:transparent"></div>
<div class="t" style="left:-386.5px;width:2000px;text-align:center;top:1624.5px;font-size:29px;line-height:29px;color:#ffffff;font-weight:bold;">0.50</div>
<div class="ab" style="left:715.8px;top:1614.4px;width:172.6px;height:48.3px;border:3px solid #8e9090;background:transparent"></div>
<div class="t" style="left:-197.9px;width:2000px;text-align:center;top:1624.5px;font-size:29px;line-height:29px;color:#ffffff;font-weight:bold;">0.15</div>
<div class="t" style="left:-604.0px;width:2000px;text-align:center;top:1663.6px;font-size:30px;line-height:30px;color:#e8e2d8;font-weight:bold;">ROOM</div>
<div class="t" style="left:-386.0px;width:2000px;text-align:center;top:1663.6px;font-size:30px;line-height:30px;color:#e8e2d8;font-weight:bold;">DAMP</div>
<div class="t" style="left:-199.0px;width:2000px;text-align:center;top:1663.6px;font-size:30px;line-height:30px;color:#e8e2d8;font-weight:bold;">MIX</div>
<div class="ab" style="left:930.5px;top:1444.8px;width:868.2px;height:445.70000000000005px;border:4px solid #3c3a38;border-radius:17px;background:#1a1918;overflow:hidden"><div class="ab" style="left:0;top:0;width:100%;height:56.799999999999955px;background:linear-gradient(#d4604c,#b44832 50%,#942a16)"></div></div>
<div class="t" style="left:364.6px;width:2000px;text-align:center;top:1461.0px;font-size:29px;line-height:29px;color:#e8e0da;font-weight:bold;">DELAY</div>
<svg style="left:0;top:0" width="3383" height="1946"><defs><linearGradient id="kf13" x1="0" y1="0" x2="0" y2="1"><stop offset="0" stop-color="#0e0804"/><stop offset="0.1" stop-color="#200c06"/><stop offset="0.4" stop-color="#5e1806"/><stop offset="0.7" stop-color="#b82a04"/><stop offset="1" stop-color="#f43800"/></linearGradient><linearGradient id="kp13" x1="0" y1="0" x2="0" y2="1"><stop offset="0" stop-color="#f07868" stop-opacity="0"/><stop offset="0.45" stop-color="#f07868" stop-opacity="0"/><stop offset="1" stop-color="#f47a68" stop-opacity="1"/></linearGradient><linearGradient id="ka13" gradientUnits="userSpaceOnUse" x1="0" y1="1476" x2="0" y2="1606"><stop offset="0" stop-color="#f06448"/><stop offset="1" stop-color="#cc3418"/></linearGradient></defs><circle cx="1289" cy="1541" r="65" fill="rgba(0,0,0,0.45)"/><path d="M1251.40,1585.81 A58.5,58.5 0 1 1 1326.60,1585.81" fill="none" stroke="#4a4846" stroke-width="13" stroke-linecap="round"/><path d="M1251.40,1585.81 A58.5,58.5 0 0 1 1263.36,1488.42" fill="none" stroke="url(#ka13)" stroke-width="13" stroke-linecap="round"/><circle cx="1289" cy="1541" r="37.6" fill="url(#kf13)"/><circle cx="1289" cy="1541" r="39.900000000000006" fill="none" stroke="rgba(205,192,165,0.48)" stroke-width="4.6"/><circle cx="1289" cy="1541" r="38.888" fill="none" stroke="url(#kp13)" stroke-width="2.07"/><line x1="1289" y1="1541" x2="1280.13" y2="1521.97" stroke="#ff3c10" stroke-width="7"/><circle cx="1280.13" cy="1521.97" r="9.3" fill="#ff3c10"/></svg>
<svg style="left:0;top:0" width="3383" height="1946"><defs><linearGradient id="kf14" x1="0" y1="0" x2="0" y2="1"><stop offset="0" stop-color="#0e0804"/><stop offset="0.1" stop-color="#200c06"/><stop offset="0.4" stop-color="#5e1806"/><stop offset="0.7" stop-color="#b82a04"/><stop offset="1" stop-color="#f43800"/></linearGradient><linearGradient id="kp14" x1="0" y1="0" x2="0" y2="1"><stop offset="0" stop-color="#f07868" stop-opacity="0"/><stop offset="0.45" stop-color="#f07868" stop-opacity="0"/><stop offset="1" stop-color="#f47a68" stop-opacity="1"/></linearGradient><linearGradient id="ka14" gradientUnits="userSpaceOnUse" x1="0" y1="1476" x2="0" y2="1606"><stop offset="0" stop-color="#f06448"/><stop offset="1" stop-color="#cc3418"/></linearGradient></defs><circle cx="1506.3" cy="1541" r="65" fill="rgba(0,0,0,0.45)"/><path d="M1468.70,1585.81 A58.5,58.5 0 1 1 1543.90,1585.81" fill="none" stroke="#4a4846" stroke-width="13" stroke-linecap="round"/><circle cx="1506.3" cy="1541" r="37.6" fill="url(#kf14)"/><circle cx="1506.3" cy="1541" r="39.900000000000006" fill="none" stroke="rgba(205,192,165,0.48)" stroke-width="4.6"/><circle cx="1506.3" cy="1541" r="38.888" fill="none" stroke="url(#kp14)" stroke-width="2.07"/><line x1="1506.3" y1="1541" x2="1493.87" y2="1557.92" stroke="#ff3c10" stroke-width="7"/><circle cx="1493.87" cy="1557.92" r="9.3" fill="#ff3c10"/></svg>
<svg style="left:0;top:0" width="3383" height="1946"><defs><linearGradient id="kf15" x1="0" y1="0" x2="0" y2="1"><stop offset="0" stop-color="#0e0804"/><stop offset="0.1" stop-color="#200c06"/><stop offset="0.4" stop-color="#5e1806"/><stop offset="0.7" stop-color="#b82a04"/><stop offset="1" stop-color="#f43800"/></linearGradient><linearGradient id="kp15" x1="0" y1="0" x2="0" y2="1"><stop offset="0" stop-color="#f07868" stop-opacity="0"/><stop offset="0.45" stop-color="#f07868" stop-opacity="0"/><stop offset="1" stop-color="#f47a68" stop-opacity="1"/></linearGradient><linearGradient id="ka15" gradientUnits="userSpaceOnUse" x1="0" y1="1476" x2="0" y2="1606"><stop offset="0" stop-color="#f06448"/><stop offset="1" stop-color="#cc3418"/></linearGradient></defs><circle cx="1697.5" cy="1541" r="65" fill="rgba(0,0,0,0.45)"/><path d="M1659.90,1585.81 A58.5,58.5 0 1 1 1735.10,1585.81" fill="none" stroke="#4a4846" stroke-width="13" stroke-linecap="round"/><path d="M1659.90,1585.81 A58.5,58.5 0 0 1 1639.04,1538.96" fill="none" stroke="url(#ka15)" stroke-width="13" stroke-linecap="round"/><circle cx="1697.5" cy="1541" r="37.6" fill="url(#kf15)"/><circle cx="1697.5" cy="1541" r="39.900000000000006" fill="none" stroke="rgba(205,192,165,0.48)" stroke-width="4.6"/><circle cx="1697.5" cy="1541" r="38.888" fill="none" stroke="url(#kp15)" stroke-width="2.07"/><line x1="1697.5" y1="1541" x2="1676.58" y2="1539.17" stroke="#ff3c10" stroke-width="7"/><circle cx="1676.58" cy="1539.17" r="9.3" fill="#ff3c10"/></svg>
<div class="bb" style="left:950.0px;top:1514.4px;width:214.3px;height:72.0px;border-radius:12px;background:#3b3b3b"><div class="bv" style="left:5px;right:5px;top:5px;bottom:5px;border-radius:8px;background:linear-gradient(#9a9898 0,#8a8888 7px,#454343 42%,#1a1a1a 72%,#0b0b0b 86%,#0b0b0b 100%)"></div><div class="bv" style="left:5px;right:5px;top:5px;height:7px;border-radius:8px 8px 6px 6px;background:#c6c2c2"></div><div class="bv" style="left:10px;right:10px;top:11px;bottom:11px;border-radius:3px;background:#c82a10"></div></div>
<div class="t" style="left:57.2px;width:2000px;text-align:center;top:1534.0px;font-size:32.5px;line-height:32.5px;color:#ffffff;font-weight:bold;">DLY ON</div>
<div class="t" style="left:56.5px;width:2000px;text-align:center;top:1601.4px;font-size:30px;line-height:30px;color:#e8e2d8;font-weight:bold;">ON / OFF</div>
<div class="ab" style="left:1189.0px;top:1615.0px;width:201.3px;height:47.7px;border:3px solid #8e9090;background:transparent"></div>
<div class="t" style="left:289.7px;width:2000px;text-align:center;top:1624.8px;font-size:29px;line-height:29px;color:#ffffff;font-weight:bold;">0.250</div>
<div class="ab" style="left:1406.0px;top:1615.0px;width:201.0px;height:47.7px;border:3px solid #8e9090;background:transparent"></div>
<div class="t" style="left:506.5px;width:2000px;text-align:center;top:1624.8px;font-size:29px;line-height:29px;color:#ffffff;font-weight:bold;">0.00</div>
<div class="ab" style="left:1616.0px;top:1615.0px;width:164.0px;height:47.7px;border:3px solid #8e9090;background:transparent"></div>
<div class="t" style="left:698.0px;width:2000px;text-align:center;top:1624.8px;font-size:29px;line-height:29px;color:#ffffff;font-weight:bold;">0.21</div>
<div class="t" style="left:289.7px;width:2000px;text-align:center;top:1663.6px;font-size:30px;line-height:30px;color:#e8e2d8;font-weight:bold;">TIME</div>
<div class="t" style="left:506.5px;width:2000px;text-align:center;top:1663.6px;font-size:30px;line-height:30px;color:#e8e2d8;font-weight:bold;">FEED</div>
<div class="t" style="left:698.0px;width:2000px;text-align:center;top:1663.6px;font-size:30px;line-height:30px;color:#e8e2d8;font-weight:bold;">MIX</div>
<div class="t" style="left:-940.0px;width:2000px;text-align:right;top:1710.8px;font-size:25px;line-height:25px;color:#a8a4a0;font-weight:bold;">SRT</div>
<div class="t" style="left:-940.0px;width:2000px;text-align:right;top:1761.8px;font-size:25px;line-height:25px;color:#a8a4a0;font-weight:bold;">T</div>
<div class="t" style="left:-940.0px;width:2000px;text-align:right;top:1814.8px;font-size:25px;line-height:25px;color:#a8a4a0;font-weight:bold;">D</div>
<div class="bb" style="left:1069.4px;top:1694.3px;width:147.6px;height:57.3px;border-radius:10px;background:#12c428"><div class="bv" style="left:4px;right:4px;top:4px;bottom:4px;border-radius:7px;background:linear-gradient(#9a9898 0,#8a8888 5.5px,#454343 42%,#1a1a1a 72%,#0b0b0b 86%,#0b0b0b 100%)"></div><div class="bv" style="left:4px;right:4px;top:4px;height:5.5px;border-radius:7px 7px 4.5px 4.5px;background:#c6c2c2"></div><div class="bv" style="left:9px;right:9px;top:8.5px;bottom:8px;border-radius:3px;background:#0c0b0b"></div></div>
<div class="t" style="left:143.2px;width:2000px;text-align:center;top:1706.2px;font-size:35px;line-height:35px;color:#12c232;font-weight:bold;">1/8</div>
<div class="bb" style="left:1231.1px;top:1694.3px;width:147.6px;height:57.3px;border-radius:10px;background:#3b3b3b"><div class="bv" style="left:4px;right:4px;top:4px;bottom:4px;border-radius:7px;background:linear-gradient(#9a9898 0,#8a8888 5.5px,#454343 42%,#1a1a1a 72%,#0b0b0b 86%,#0b0b0b 100%)"></div><div class="bv" style="left:4px;right:4px;top:4px;height:5.5px;border-radius:7px 7px 4.5px 4.5px;background:#c6c2c2"></div><div class="bv" style="left:9px;right:9px;top:8.5px;bottom:8px;border-radius:3px;background:#0c0b0b"></div></div>
<div class="t" style="left:304.9px;width:2000px;text-align:center;top:1706.2px;font-size:35px;line-height:35px;color:#b4b0ac;font-weight:bold;">1/4</div>
<div class="bb" style="left:1392.7px;top:1694.3px;width:147.6px;height:57.3px;border-radius:10px;background:#3b3b3b"><div class="bv" style="left:4px;right:4px;top:4px;bottom:4px;border-radius:7px;background:linear-gradient(#9a9898 0,#8a8888 5.5px,#454343 42%,#1a1a1a 72%,#0b0b0b 86%,#0b0b0b 100%)"></div><div class="bv" style="left:4px;right:4px;top:4px;height:5.5px;border-radius:7px 7px 4.5px 4.5px;background:#c6c2c2"></div><div class="bv" style="left:9px;right:9px;top:8.5px;bottom:8px;border-radius:3px;background:#0c0b0b"></div></div>
<div class="t" style="left:466.5px;width:2000px;text-align:center;top:1706.2px;font-size:35px;line-height:35px;color:#b4b0ac;font-weight:bold;">1/2</div>
<div class="bb" style="left:1554.4px;top:1694.3px;width:147.6px;height:57.3px;border-radius:10px;background:#3b3b3b"><div class="bv" style="left:4px;right:4px;top:4px;bottom:4px;border-radius:7px;background:linear-gradient(#9a9898 0,#8a8888 5.5px,#454343 42%,#1a1a1a 72%,#0b0b0b 86%,#0b0b0b 100%)"></div><div class="bv" style="left:4px;right:4px;top:4px;height:5.5px;border-radius:7px 7px 4.5px 4.5px;background:#c6c2c2"></div><div class="bv" style="left:9px;right:9px;top:8.5px;bottom:8px;border-radius:3px;background:#0c0b0b"></div></div>
<div class="t" style="left:628.2px;width:2000px;text-align:center;top:1706.2px;font-size:35px;line-height:35px;color:#b4b0ac;font-weight:bold;">4/4</div>
<div class="bb" style="left:1069.4px;top:1762.1px;width:147.6px;height:57.3px;border-radius:10px;background:#3b3b3b"><div class="bv" style="left:4px;right:4px;top:4px;bottom:4px;border-radius:7px;background:linear-gradient(#9a9898 0,#8a8888 5.5px,#454343 42%,#1a1a1a 72%,#0b0b0b 86%,#0b0b0b 100%)"></div><div class="bv" style="left:4px;right:4px;top:4px;height:5.5px;border-radius:7px 7px 4.5px 4.5px;background:#c6c2c2"></div><div class="bv" style="left:9px;right:9px;top:8.5px;bottom:8px;border-radius:3px;background:#0c0b0b"></div></div>
<div class="t" style="left:143.2px;width:2000px;text-align:center;top:1774.0px;font-size:35px;line-height:35px;color:#b4b0ac;font-weight:bold;">1/8T</div>
<div class="bb" style="left:1231.1px;top:1762.1px;width:147.6px;height:57.3px;border-radius:10px;background:#3b3b3b"><div class="bv" style="left:4px;right:4px;top:4px;bottom:4px;border-radius:7px;background:linear-gradient(#9a9898 0,#8a8888 5.5px,#454343 42%,#1a1a1a 72%,#0b0b0b 86%,#0b0b0b 100%)"></div><div class="bv" style="left:4px;right:4px;top:4px;height:5.5px;border-radius:7px 7px 4.5px 4.5px;background:#c6c2c2"></div><div class="bv" style="left:9px;right:9px;top:8.5px;bottom:8px;border-radius:3px;background:#0c0b0b"></div></div>
<div class="t" style="left:304.9px;width:2000px;text-align:center;top:1774.0px;font-size:35px;line-height:35px;color:#b4b0ac;font-weight:bold;">1/4T</div>
<div class="bb" style="left:1392.7px;top:1762.1px;width:147.6px;height:57.3px;border-radius:10px;background:#3b3b3b"><div class="bv" style="left:4px;right:4px;top:4px;bottom:4px;border-radius:7px;background:linear-gradient(#9a9898 0,#8a8888 5.5px,#454343 42%,#1a1a1a 72%,#0b0b0b 86%,#0b0b0b 100%)"></div><div class="bv" style="left:4px;right:4px;top:4px;height:5.5px;border-radius:7px 7px 4.5px 4.5px;background:#c6c2c2"></div><div class="bv" style="left:9px;right:9px;top:8.5px;bottom:8px;border-radius:3px;background:#0c0b0b"></div></div>
<div class="t" style="left:466.5px;width:2000px;text-align:center;top:1774.0px;font-size:35px;line-height:35px;color:#b4b0ac;font-weight:bold;">1/2T</div>
<div class="bb" style="left:1554.4px;top:1762.1px;width:147.6px;height:57.3px;border-radius:10px;background:#3b3b3b"><div class="bv" style="left:4px;right:4px;top:4px;bottom:4px;border-radius:7px;background:linear-gradient(#9a9898 0,#8a8888 5.5px,#454343 42%,#1a1a1a 72%,#0b0b0b 86%,#0b0b0b 100%)"></div><div class="bv" style="left:4px;right:4px;top:4px;height:5.5px;border-radius:7px 7px 4.5px 4.5px;background:#c6c2c2"></div><div class="bv" style="left:9px;right:9px;top:8.5px;bottom:8px;border-radius:3px;background:#0c0b0b"></div></div>
<div class="t" style="left:628.2px;width:2000px;text-align:center;top:1774.0px;font-size:35px;line-height:35px;color:#b4b0ac;font-weight:bold;">4/4T</div>
<div class="bb" style="left:1069.4px;top:1830.0px;width:147.6px;height:57.3px;border-radius:10px;background:#3b3b3b"><div class="bv" style="left:4px;right:4px;top:4px;bottom:4px;border-radius:7px;background:linear-gradient(#9a9898 0,#8a8888 5.5px,#454343 42%,#1a1a1a 72%,#0b0b0b 86%,#0b0b0b 100%)"></div><div class="bv" style="left:4px;right:4px;top:4px;height:5.5px;border-radius:7px 7px 4.5px 4.5px;background:#c6c2c2"></div><div class="bv" style="left:9px;right:9px;top:8.5px;bottom:8px;border-radius:3px;background:#0c0b0b"></div></div>
<div class="t" style="left:143.2px;width:2000px;text-align:center;top:1841.9px;font-size:35px;line-height:35px;color:#b4b0ac;font-weight:bold;">1/8D</div>
<div class="bb" style="left:1231.1px;top:1830.0px;width:147.6px;height:57.3px;border-radius:10px;background:#3b3b3b"><div class="bv" style="left:4px;right:4px;top:4px;bottom:4px;border-radius:7px;background:linear-gradient(#9a9898 0,#8a8888 5.5px,#454343 42%,#1a1a1a 72%,#0b0b0b 86%,#0b0b0b 100%)"></div><div class="bv" style="left:4px;right:4px;top:4px;height:5.5px;border-radius:7px 7px 4.5px 4.5px;background:#c6c2c2"></div><div class="bv" style="left:9px;right:9px;top:8.5px;bottom:8px;border-radius:3px;background:#0c0b0b"></div></div>
<div class="t" style="left:304.9px;width:2000px;text-align:center;top:1841.9px;font-size:35px;line-height:35px;color:#b4b0ac;font-weight:bold;">1/4D</div>
<div class="bb" style="left:1392.7px;top:1830.0px;width:147.6px;height:57.3px;border-radius:10px;background:#3b3b3b"><div class="bv" style="left:4px;right:4px;top:4px;bottom:4px;border-radius:7px;background:linear-gradient(#9a9898 0,#8a8888 5.5px,#454343 42%,#1a1a1a 72%,#0b0b0b 86%,#0b0b0b 100%)"></div><div class="bv" style="left:4px;right:4px;top:4px;height:5.5px;border-radius:7px 7px 4.5px 4.5px;background:#c6c2c2"></div><div class="bv" style="left:9px;right:9px;top:8.5px;bottom:8px;border-radius:3px;background:#0c0b0b"></div></div>
<div class="t" style="left:466.5px;width:2000px;text-align:center;top:1841.9px;font-size:35px;line-height:35px;color:#b4b0ac;font-weight:bold;">1/2D</div>
<div class="bb" style="left:1554.4px;top:1830.0px;width:147.6px;height:57.3px;border-radius:10px;background:#3b3b3b"><div class="bv" style="left:4px;right:4px;top:4px;bottom:4px;border-radius:7px;background:linear-gradient(#9a9898 0,#8a8888 5.5px,#454343 42%,#1a1a1a 72%,#0b0b0b 86%,#0b0b0b 100%)"></div><div class="bv" style="left:4px;right:4px;top:4px;height:5.5px;border-radius:7px 7px 4.5px 4.5px;background:#c6c2c2"></div><div class="bv" style="left:9px;right:9px;top:8.5px;bottom:8px;border-radius:3px;background:#0c0b0b"></div></div>
<div class="t" style="left:628.2px;width:2000px;text-align:center;top:1841.9px;font-size:35px;line-height:35px;color:#b4b0ac;font-weight:bold;">4/4D</div>
<div class="ab" style="left:1823.4px;top:1445.3px;width:942.5999999999999px;height:377.4000000000001px;border:4px solid #3c3a38;border-radius:17px;background:#1a1918;overflow:hidden"><div class="ab" style="left:0;top:0;width:100%;height:56.600000000000136px;background:linear-gradient(#d4604c,#b44832 50%,#942a16)"></div></div>
<div class="t" style="left:1294.7px;width:2000px;text-align:center;top:1462.2px;font-size:29px;line-height:29px;color:#e8e0da;font-weight:bold;">HI-PASS</div>
<div class="bb" style="left:1842.6px;top:1519.0px;width:266.3px;height:71.0px;border-radius:12px;background:#3b3b3b"><div class="bv" style="left:5px;right:5px;top:5px;bottom:5px;border-radius:8px;background:linear-gradient(#9a9898 0,#8a8888 6px,#454343 42%,#1a1a1a 72%,#0b0b0b 86%,#0b0b0b 100%)"></div><div class="bv" style="left:5px;right:5px;top:5px;height:6px;border-radius:8px 8px 5px 5px;background:#c6c2c2"></div><div class="bv" style="left:10px;right:10px;top:10px;bottom:10px;border-radius:3px;background:#0c0b0b"></div></div>
<div class="t" style="left:975.8px;width:2000px;text-align:center;top:1538.9px;font-size:32px;line-height:32px;color:#a4a09c;font-weight:bold;">HPF OFF</div>
<div class="bb" style="left:2127.0px;top:1519.0px;width:282.6px;height:71.0px;border-radius:12px;background:#12c428"><div class="bv" style="left:5px;right:5px;top:5px;bottom:5px;border-radius:8px;background:linear-gradient(#9a9898 0,#8a8888 6px,#454343 42%,#1a1a1a 72%,#0b0b0b 86%,#0b0b0b 100%)"></div><div class="bv" style="left:5px;right:5px;top:5px;height:6px;border-radius:8px 8px 5px 5px;background:#c6c2c2"></div><div class="bv" style="left:10px;right:10px;top:10px;bottom:10px;border-radius:3px;background:#0c0b0b"></div></div>
<div class="t" style="left:1268.3px;width:2000px;text-align:center;top:1538.9px;font-size:32px;line-height:32px;color:#12c232;font-weight:bold;">24 dB</div>
<div class="bb" style="left:2427.0px;top:1519.0px;width:281.6px;height:71.0px;border-radius:12px;background:#3b3b3b"><div class="bv" style="left:5px;right:5px;top:5px;bottom:5px;border-radius:8px;background:linear-gradient(#9a9898 0,#8a8888 6px,#454343 42%,#1a1a1a 72%,#0b0b0b 86%,#0b0b0b 100%)"></div><div class="bv" style="left:5px;right:5px;top:5px;height:6px;border-radius:8px 8px 5px 5px;background:#c6c2c2"></div><div class="bv" style="left:10px;right:10px;top:10px;bottom:10px;border-radius:3px;background:#0c0b0b"></div></div>
<div class="t" style="left:1567.8px;width:2000px;text-align:center;top:1538.9px;font-size:32px;line-height:32px;color:#a4a09c;font-weight:bold;">48 dB</div>
<div class="bb" style="left:1841.4px;top:1616.6px;width:162.0px;height:71.0px;border-radius:12px;background:#12c428"><div class="bv" style="left:5px;right:5px;top:5px;bottom:5px;border-radius:8px;background:linear-gradient(#9a9898 0,#8a8888 6px,#454343 42%,#1a1a1a 72%,#0b0b0b 86%,#0b0b0b 100%)"></div><div class="bv" style="left:5px;right:5px;top:5px;height:6px;border-radius:8px 8px 5px 5px;background:#c6c2c2"></div><div class="bv" style="left:10px;right:10px;top:10px;bottom:10px;border-radius:3px;background:#0c0b0b"></div></div>
<div class="t" style="left:922.4px;width:2000px;text-align:center;top:1635.9px;font-size:32px;line-height:32px;color:#12c232;font-weight:bold;">30 Hz</div>
<div class="bb" style="left:2017.9px;top:1616.6px;width:162.0px;height:71.0px;border-radius:12px;background:#3b3b3b"><div class="bv" style="left:5px;right:5px;top:5px;bottom:5px;border-radius:8px;background:linear-gradient(#9a9898 0,#8a8888 6px,#454343 42%,#1a1a1a 72%,#0b0b0b 86%,#0b0b0b 100%)"></div><div class="bv" style="left:5px;right:5px;top:5px;height:6px;border-radius:8px 8px 5px 5px;background:#c6c2c2"></div><div class="bv" style="left:10px;right:10px;top:10px;bottom:10px;border-radius:3px;background:#0c0b0b"></div></div>
<div class="t" style="left:1098.9px;width:2000px;text-align:center;top:1635.9px;font-size:32px;line-height:32px;color:#a4a09c;font-weight:bold;">50 Hz</div>
<div class="bb" style="left:2194.4px;top:1616.6px;width:162.0px;height:71.0px;border-radius:12px;background:#3b3b3b"><div class="bv" style="left:5px;right:5px;top:5px;bottom:5px;border-radius:8px;background:linear-gradient(#9a9898 0,#8a8888 6px,#454343 42%,#1a1a1a 72%,#0b0b0b 86%,#0b0b0b 100%)"></div><div class="bv" style="left:5px;right:5px;top:5px;height:6px;border-radius:8px 8px 5px 5px;background:#c6c2c2"></div><div class="bv" style="left:10px;right:10px;top:10px;bottom:10px;border-radius:3px;background:#0c0b0b"></div></div>
<div class="t" style="left:1275.4px;width:2000px;text-align:center;top:1635.9px;font-size:32px;line-height:32px;color:#a4a09c;font-weight:bold;">100 Hz</div>
<div class="bb" style="left:2370.9px;top:1616.6px;width:162.0px;height:71.0px;border-radius:12px;background:#3b3b3b"><div class="bv" style="left:5px;right:5px;top:5px;bottom:5px;border-radius:8px;background:linear-gradient(#9a9898 0,#8a8888 6px,#454343 42%,#1a1a1a 72%,#0b0b0b 86%,#0b0b0b 100%)"></div><div class="bv" style="left:5px;right:5px;top:5px;height:6px;border-radius:8px 8px 5px 5px;background:#c6c2c2"></div><div class="bv" style="left:10px;right:10px;top:10px;bottom:10px;border-radius:3px;background:#0c0b0b"></div></div>
<div class="t" style="left:1451.9px;width:2000px;text-align:center;top:1635.9px;font-size:32px;line-height:32px;color:#a4a09c;font-weight:bold;">125 Hz</div>
<div class="bb" style="left:2547.4px;top:1616.6px;width:162.0px;height:71.0px;border-radius:12px;background:#3b3b3b"><div class="bv" style="left:5px;right:5px;top:5px;bottom:5px;border-radius:8px;background:linear-gradient(#9a9898 0,#8a8888 6px,#454343 42%,#1a1a1a 72%,#0b0b0b 86%,#0b0b0b 100%)"></div><div class="bv" style="left:5px;right:5px;top:5px;height:6px;border-radius:8px 8px 5px 5px;background:#c6c2c2"></div><div class="bv" style="left:10px;right:10px;top:10px;bottom:10px;border-radius:3px;background:#0c0b0b"></div></div>
<div class="t" style="left:1628.4px;width:2000px;text-align:center;top:1635.9px;font-size:32px;line-height:32px;color:#a4a09c;font-weight:bold;">150 Hz</div>
<svg style="left:0;top:0" width="3383" height="1946"><defs><linearGradient id="kf16" x1="0" y1="0" x2="0" y2="1"><stop offset="0" stop-color="#0e0804"/><stop offset="0.1" stop-color="#200c06"/><stop offset="0.4" stop-color="#5e1806"/><stop offset="0.7" stop-color="#b82a04"/><stop offset="1" stop-color="#f43800"/></linearGradient><linearGradient id="kp16" x1="0" y1="0" x2="0" y2="1"><stop offset="0" stop-color="#f07868" stop-opacity="0"/><stop offset="0.45" stop-color="#f07868" stop-opacity="0"/><stop offset="1" stop-color="#f47a68" stop-opacity="1"/></linearGradient><linearGradient id="ka16" gradientUnits="userSpaceOnUse" x1="0" y1="1462.5" x2="0" y2="1657.5"><stop offset="0" stop-color="#f06448"/><stop offset="1" stop-color="#cc3418"/></linearGradient></defs><circle cx="3070.7" cy="1560" r="97.5" fill="rgba(0,0,0,0.3)"/><path d="M3012.05,1629.90 A91.25,91.25 0 1 1 3129.35,1629.90" fill="none" stroke="#4a4a4a" stroke-width="12.5" stroke-linecap="round"/><path d="M3012.05,1629.90 A91.25,91.25 0 1 1 3129.35,1629.90" fill="none" stroke="url(#ka16)" stroke-width="12.5" stroke-linecap="round"/><circle cx="3070.7" cy="1560" r="69.4" fill="url(#kf16)"/><circle cx="3070.7" cy="1560" r="72.4" fill="none" stroke="rgba(205,192,165,0.48)" stroke-width="6"/><circle cx="3070.7" cy="1560" r="71.08000000000001" fill="none" stroke="url(#kp16)" stroke-width="2.7"/><line x1="3070.7" y1="1560" x2="3103.18" y2="1604.38" stroke="#ff3c10" stroke-width="6.6"/><circle cx="3103.18" cy="1604.38" r="9.2" fill="#ff3c10"/></svg>
<div class="ab" style="left:2965.4px;top:1666.8px;width:206.3px;height:49.2px;border:3px solid #8e9090;background:transparent"></div>
<div class="t" style="left:2068.6px;width:2000px;text-align:center;top:1677.4px;font-size:29px;line-height:29px;color:#ffffff;font-weight:bold;">1.00</div>
<div class="t" style="left:2071.0px;width:2000px;text-align:center;top:1730.4px;font-size:30px;line-height:30px;color:#e8e2d8;font-weight:bold;">MASTER VOL</div>
<div class="ab" style="left:0;top:1730px;width:3px;height:129px;background:#7c7c7c"></div>
</body></html>
